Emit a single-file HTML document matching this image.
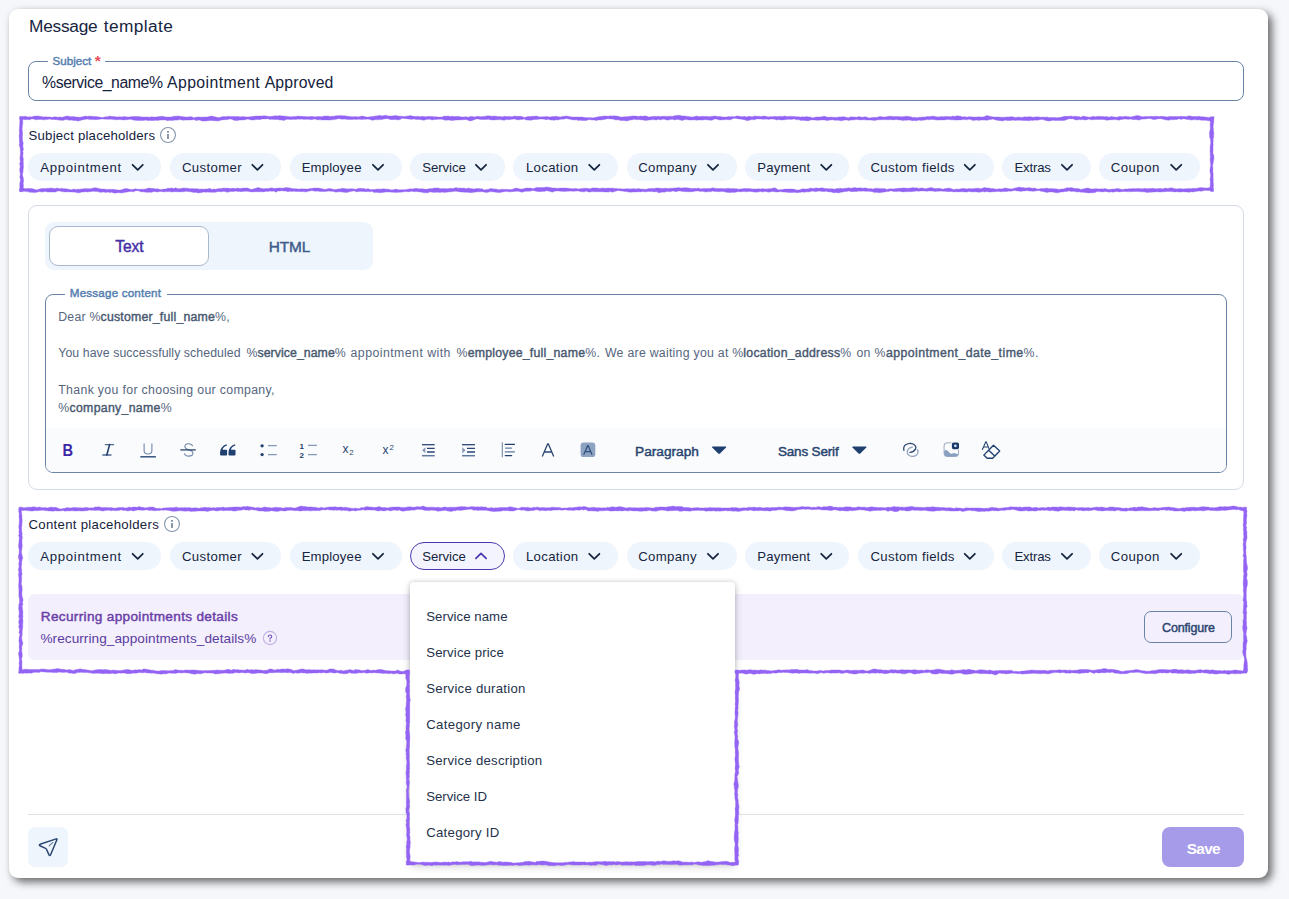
<!DOCTYPE html>
<html><head><meta charset="utf-8"><title>Message template</title>
<style>
*{box-sizing:border-box;margin:0;padding:0}
html,body{width:1289px;height:899px;overflow:hidden}
body{background:#f6f7fb;font-family:"Liberation Sans",sans-serif;color:#16253f;position:relative}
.a{position:absolute}
</style></head><body>
<div class="a" style="left:9px;top:8.5px;width:1259px;height:869.5px;background:#fff;border-radius:9px;box-shadow:4px 4px 9px rgba(0,0,0,.58),0 0 2px rgba(0,0,0,.06)"></div>

<!-- subject field -->
<div class="a" style="left:28px;top:61px;width:1216px;height:40px;border:1px solid #6a84a7;border-radius:8px"></div>
<div class="a" style="left:48px;top:58px;width:57px;height:8px;background:#fff"></div>

<svg style="position:absolute;left:159.0px;top:125.9px" width="18" height="18" viewBox="0 0 18 18"><circle cx="9" cy="9" r="7.45" fill="none" stroke="#8594ab" stroke-width="1.1"/><rect x="8.35" y="7.9" width="1.3" height="5.2" rx=".4" fill="#4a607f"/><circle cx="9" cy="5.8" r=".9" fill="#4a607f"/></svg><div style="position:absolute;left:28.3px;top:153.0px;width:133.0px;height:28px;border-radius:14px;background:#eff5fc;"></div><svg style="position:absolute;left:0;top:0" width="1289" height="899"><path d="M132.6 164.8 L137.7 169.8 L142.8 164.8" fill="none" stroke="#16253f" stroke-width="1.75" stroke-linecap="round" stroke-linejoin="round"/></svg><div style="position:absolute;left:170.3px;top:153.0px;width:111.2px;height:28px;border-radius:14px;background:#eff5fc;"></div><svg style="position:absolute;left:0;top:0" width="1289" height="899"><path d="M252.3 164.8 L257.4 169.8 L262.5 164.8" fill="none" stroke="#16253f" stroke-width="1.75" stroke-linecap="round" stroke-linejoin="round"/></svg><div style="position:absolute;left:290.0px;top:153.0px;width:112.0px;height:28px;border-radius:14px;background:#eff5fc;"></div><svg style="position:absolute;left:0;top:0" width="1289" height="899"><path d="M372.9 164.8 L378.0 169.8 L383.1 164.8" fill="none" stroke="#16253f" stroke-width="1.75" stroke-linecap="round" stroke-linejoin="round"/></svg><div style="position:absolute;left:410.0px;top:153.0px;width:94.5px;height:28px;border-radius:14px;background:#eff5fc;"></div><svg style="position:absolute;left:0;top:0" width="1289" height="899"><path d="M475.9 164.8 L481.0 169.8 L486.1 164.8" fill="none" stroke="#16253f" stroke-width="1.75" stroke-linecap="round" stroke-linejoin="round"/></svg><div style="position:absolute;left:513.4px;top:153.0px;width:104.4px;height:28px;border-radius:14px;background:#eff5fc;"></div><svg style="position:absolute;left:0;top:0" width="1289" height="899"><path d="M589.2 164.8 L594.3 169.8 L599.4 164.8" fill="none" stroke="#16253f" stroke-width="1.75" stroke-linecap="round" stroke-linejoin="round"/></svg><div style="position:absolute;left:626.8px;top:153.0px;width:109.8px;height:28px;border-radius:14px;background:#eff5fc;"></div><svg style="position:absolute;left:0;top:0" width="1289" height="899"><path d="M707.9 164.8 L713.0 169.8 L718.1 164.8" fill="none" stroke="#16253f" stroke-width="1.75" stroke-linecap="round" stroke-linejoin="round"/></svg><div style="position:absolute;left:744.8px;top:153.0px;width:104.6px;height:28px;border-radius:14px;background:#eff5fc;"></div><svg style="position:absolute;left:0;top:0" width="1289" height="899"><path d="M821.2 164.8 L826.3 169.8 L831.4 164.8" fill="none" stroke="#16253f" stroke-width="1.75" stroke-linecap="round" stroke-linejoin="round"/></svg><div style="position:absolute;left:858.0px;top:153.0px;width:136.0px;height:28px;border-radius:14px;background:#eff5fc;"></div><svg style="position:absolute;left:0;top:0" width="1289" height="899"><path d="M964.7 164.8 L969.8 169.8 L974.9 164.8" fill="none" stroke="#16253f" stroke-width="1.75" stroke-linecap="round" stroke-linejoin="round"/></svg><div style="position:absolute;left:1002.0px;top:153.0px;width:88.6px;height:28px;border-radius:14px;background:#eff5fc;"></div><svg style="position:absolute;left:0;top:0" width="1289" height="899"><path d="M1061.9 164.8 L1067.0 169.8 L1072.1 164.8" fill="none" stroke="#16253f" stroke-width="1.75" stroke-linecap="round" stroke-linejoin="round"/></svg><div style="position:absolute;left:1098.8px;top:153.0px;width:101.2px;height:28px;border-radius:14px;background:#eff5fc;"></div><svg style="position:absolute;left:0;top:0" width="1289" height="899"><path d="M1171.1 164.8 L1176.2 169.8 L1181.3 164.8" fill="none" stroke="#16253f" stroke-width="1.75" stroke-linecap="round" stroke-linejoin="round"/></svg>

<!-- editor container -->
<div class="a" style="left:28px;top:205px;width:1216px;height:285px;border:1px solid #d5dbe5;border-radius:9px"></div>
<div class="a" style="left:45px;top:222px;width:328px;height:48px;background:#eff5fc;border-radius:9px"></div>
<div class="a" style="left:49px;top:226px;width:160px;height:40px;background:#fff;border:1px solid #aab8cd;border-radius:9px"></div>

<div class="a" style="left:45px;top:294px;width:1182px;height:178.5px;border:1px solid #6a84a7;border-radius:8px;overflow:hidden"><div class="a" style="left:0;right:0;bottom:0;height:44px;background:#fafbfd"></div></div>
<div class="a" style="left:64.5px;top:290px;width:102px;height:8px;background:#fff"></div>
<svg class="a" style="left:0;top:0" width="1289" height="899" viewBox="0 0 1289 899" font-family="Liberation Sans, sans-serif">
<!-- B -->
<text x="62.6" y="455.6" font-size="15.8" font-weight="bold" fill="#3b28a6" textLength="10.6" lengthAdjust="spacingAndGlyphs">B</text>
<!-- I -->
<g fill="none" stroke-linecap="round"><path d="M105.4 444.6 H113.6 M102.8 455 H111" stroke="#4f6b92" stroke-width="1.4"/><path d="M109.6 444.6 L106.8 455" stroke="#23406c" stroke-width="1.6"/></g>
<!-- U -->
<path d="M144.1 443.4 V450.2 Q144.1 454 148 454 Q151.9 454 151.9 450.2 V443.4" fill="none" stroke="#6f88a8" stroke-width="1.1"/>
<path d="M140.3 456.8 H155.9" stroke="#35557f" stroke-width="1.5"/>
<!-- S strike -->
<path d="M192.6 446.2 Q191.8 443.8 188.6 443.8 Q184.9 443.8 184.9 446.6 Q184.9 448.6 188 449.6 Q192.9 450.6 192.9 453.3 Q192.9 456.1 188.7 456.1 Q185 456.1 184.3 453.4" fill="none" stroke="#6f88a8" stroke-width="1.1"/>
<path d="M180.3 449.9 H195.8" stroke="#2a4671" stroke-width="1.3"/>
<!-- quote -->
<g fill="#1f3f6e"><path d="M226.6 444.2 Q220.2 446.4 220.1 452.6 V454.6 Q220.1 455.5 221 455.5 H226.2 Q227.1 455.5 227.1 454.6 V450.6 Q227.1 449.7 226.2 449.7 H222.6 Q223 446.9 227 445.6 Z"/><path d="M235 444.2 Q228.6 446.4 228.5 452.6 V454.6 Q228.5 455.5 229.4 455.5 H234.6 Q235.5 455.5 235.5 454.6 V450.6 Q235.5 449.7 234.6 449.7 H231 Q231.4 446.9 235.4 445.6 Z"/></g>
<!-- bullets -->
<circle cx="262.1" cy="445.8" r="1.65" fill="#1f3f6e"/><circle cx="262.1" cy="454.6" r="1.65" fill="#1f3f6e"/>
<path d="M268 445.6 H276.8 M268 454.6 H276.8" stroke="#8599b5" stroke-width="1.1"/>
<!-- numbered -->
<text x="299.4" y="448.6" font-size="8" font-weight="bold" fill="#1f3f6e">1</text>
<text x="299.4" y="457.5" font-size="8" font-weight="bold" fill="#1f3f6e">2</text>
<path d="M308 445.4 H316.9 M308 454.6 H316.9" stroke="#8599b5" stroke-width="1.1"/>
<!-- x2 sub -->
<text x="342.4" y="452.5" font-size="12" fill="#2a4671">x</text>
<text x="349.2" y="454.5" font-size="7.8" fill="#2a4671">2</text>
<!-- x2 sup -->
<text x="382.5" y="454" font-size="12" fill="#2a4671">x</text>
<text x="389.4" y="450" font-size="7.8" fill="#2a4671">2</text>
<!-- outdent -->
<path d="M422 444.7 H434.7" stroke="#2a4671" stroke-width="1.3"/><path d="M422 455.7 H434.7" stroke="#5f7a9f" stroke-width="1.5"/>
<path d="M427 448.4 H434.7 M427 452 H434.7" stroke="#2a4671" stroke-width="1.3"/>
<path d="M425.4 447.2 V453.2 L422 450.2 Z" fill="#8599b5"/>
<!-- indent -->
<path d="M462 444.7 H475" stroke="#2a4671" stroke-width="1.3"/><path d="M462 455.7 H475" stroke="#5f7a9f" stroke-width="1.5"/>
<path d="M467 448.4 H475 M467 452 H475" stroke="#2a4671" stroke-width="1.3"/>
<path d="M462.2 447.2 V453.2 L465.6 450.2 Z" fill="#8599b5"/>
<!-- align -->
<path d="M502.3 442.2 V457.3" stroke="#6f88a8" stroke-width="1.1"/>
<path d="M505.3 444.4 H514.4 M505.3 455.6 H511.6" stroke="#23406c" stroke-width="1.3" stroke-linecap="round"/>
<path d="M505.6 448.1 H511.4 M505.3 451.9 H514.4" stroke="#5f7a9f" stroke-width="1.3" stroke-linecap="round"/>
<!-- A -->
<path d="M542.3 456.6 L547.7 443.8 H548.3 L553.7 456.6 M544.3 452 H551.7" fill="none" stroke="#2a4671" stroke-width="1.3" stroke-linejoin="round"/>
<!-- A highlighted -->
<rect x="580.6" y="442.4" width="14.7" height="14.7" rx="3.2" fill="#8ea3c2"/>
<path d="M583.7 454.7 L587.7 445.6 H588.1 L592.1 454.7 M585.2 451.6 H590.6" fill="none" stroke="#2f4d7c" stroke-width="1.2" stroke-linejoin="round"/>
<!-- carets -->
<path d="M712.6 446.4 H725.6 Q726.8 446.6 726 447.6 L720 453.5 Q719.1 454.2 718.2 453.5 L712.2 447.6 Q711.4 446.6 712.6 446.4 Z" fill="#1f3f6e"/>
<path d="M852.9 446.4 H865.9 Q867.1 446.6 866.3 447.6 L860.3 453.5 Q859.4 454.2 858.5 453.5 L852.5 447.6 Q851.7 446.6 852.9 446.4 Z" fill="#1f3f6e"/>
<!-- link -->
<g fill="none" stroke-linecap="round" stroke-width="1.25">
<path d="M903.9 450.3 Q903.1 446.4 905.7 444.7 Q909.5 442.3 913.2 444 Q916.7 446 915.6 448.9 Q914 452 909.9 452.3" stroke="#2a4671"/>
<path d="M912.4 447.2 Q908.4 447.8 907.4 450.6 Q906.6 454 909.6 455.8 Q913.2 457.4 916.4 455.2 Q918.8 453 917.7 449.7" stroke="#93a4bd"/>
</g>
<!-- image -->
<path d="M951.4 442.8 H947.6 Q944.1 442.8 944.1 446.3 V453 Q944.1 456.5 947.6 456.5 H955 Q958.5 456.5 958.5 453 V449.8" fill="none" stroke="#a3b1c8" stroke-width="1.1"/>
<path d="M944.2 451 Q945.6 449.4 947.2 450.4 Q948.8 451.6 949.8 453 Q950.8 454 952.2 453.5 Q954 452.6 955.2 453.2 Q956.8 454 958.4 454.2 Q958 456.5 955 456.5 H947.6 Q944.2 456.5 944.2 453 Z" fill="#8a9fbf"/>
<rect x="951.9" y="442.4" width="7.1" height="6.9" rx="1.7" fill="#1b3a6b"/>
<circle cx="955.4" cy="445.8" r="1.4" fill="#cfe0f5"/>
<!-- clear format -->
<path d="M982.4 449.5 L985.8 441.7 H986.2 L989 448.6 M983.8 446.9 H988.2" fill="none" stroke="#27446f" stroke-width="1.05" stroke-linejoin="round" stroke-linecap="round"/>
<path d="M993.5 445.2 L999.7 451 L992.7 458.2 H987.2 L983.8 455.1 Z M988.7 450.2 L994.7 456" fill="none" stroke="#1f3f6e" stroke-width="1.35" stroke-linejoin="round"/>
</svg>

<svg style="position:absolute;left:163.0px;top:515.0px" width="18" height="18" viewBox="0 0 18 18"><circle cx="9" cy="9" r="7.45" fill="none" stroke="#8594ab" stroke-width="1.1"/><rect x="8.35" y="7.9" width="1.3" height="5.2" rx=".4" fill="#4a607f"/><circle cx="9" cy="5.8" r=".9" fill="#4a607f"/></svg><div style="position:absolute;left:28.3px;top:542.0px;width:133.0px;height:28px;border-radius:14px;background:#eff5fc;"></div><svg style="position:absolute;left:0;top:0" width="1289" height="899"><path d="M132.6 553.8 L137.7 558.8 L142.8 553.8" fill="none" stroke="#16253f" stroke-width="1.75" stroke-linecap="round" stroke-linejoin="round"/></svg><div style="position:absolute;left:170.3px;top:542.0px;width:111.2px;height:28px;border-radius:14px;background:#eff5fc;"></div><svg style="position:absolute;left:0;top:0" width="1289" height="899"><path d="M252.3 553.8 L257.4 558.8 L262.5 553.8" fill="none" stroke="#16253f" stroke-width="1.75" stroke-linecap="round" stroke-linejoin="round"/></svg><div style="position:absolute;left:290.0px;top:542.0px;width:112.0px;height:28px;border-radius:14px;background:#eff5fc;"></div><svg style="position:absolute;left:0;top:0" width="1289" height="899"><path d="M372.9 553.8 L378.0 558.8 L383.1 553.8" fill="none" stroke="#16253f" stroke-width="1.75" stroke-linecap="round" stroke-linejoin="round"/></svg><div style="position:absolute;left:410.0px;top:542.0px;width:94.5px;height:28px;border-radius:14px;background:#f3f4fd;border:1px solid #4a3aae;"></div><svg style="position:absolute;left:0;top:0" width="1289" height="899"><path d="M475.9 558.4 L481.0 553.4 L486.1 558.4" fill="none" stroke="#4a3aae" stroke-width="1.75" stroke-linecap="round" stroke-linejoin="round"/></svg><div style="position:absolute;left:513.4px;top:542.0px;width:104.4px;height:28px;border-radius:14px;background:#eff5fc;"></div><svg style="position:absolute;left:0;top:0" width="1289" height="899"><path d="M589.2 553.8 L594.3 558.8 L599.4 553.8" fill="none" stroke="#16253f" stroke-width="1.75" stroke-linecap="round" stroke-linejoin="round"/></svg><div style="position:absolute;left:626.8px;top:542.0px;width:109.8px;height:28px;border-radius:14px;background:#eff5fc;"></div><svg style="position:absolute;left:0;top:0" width="1289" height="899"><path d="M707.9 553.8 L713.0 558.8 L718.1 553.8" fill="none" stroke="#16253f" stroke-width="1.75" stroke-linecap="round" stroke-linejoin="round"/></svg><div style="position:absolute;left:744.8px;top:542.0px;width:104.6px;height:28px;border-radius:14px;background:#eff5fc;"></div><svg style="position:absolute;left:0;top:0" width="1289" height="899"><path d="M821.2 553.8 L826.3 558.8 L831.4 553.8" fill="none" stroke="#16253f" stroke-width="1.75" stroke-linecap="round" stroke-linejoin="round"/></svg><div style="position:absolute;left:858.0px;top:542.0px;width:136.0px;height:28px;border-radius:14px;background:#eff5fc;"></div><svg style="position:absolute;left:0;top:0" width="1289" height="899"><path d="M964.7 553.8 L969.8 558.8 L974.9 553.8" fill="none" stroke="#16253f" stroke-width="1.75" stroke-linecap="round" stroke-linejoin="round"/></svg><div style="position:absolute;left:1002.0px;top:542.0px;width:88.6px;height:28px;border-radius:14px;background:#eff5fc;"></div><svg style="position:absolute;left:0;top:0" width="1289" height="899"><path d="M1061.9 553.8 L1067.0 558.8 L1072.1 553.8" fill="none" stroke="#16253f" stroke-width="1.75" stroke-linecap="round" stroke-linejoin="round"/></svg><div style="position:absolute;left:1098.8px;top:542.0px;width:101.2px;height:28px;border-radius:14px;background:#eff5fc;"></div><svg style="position:absolute;left:0;top:0" width="1289" height="899"><path d="M1171.1 553.8 L1176.2 558.8 L1181.3 553.8" fill="none" stroke="#16253f" stroke-width="1.75" stroke-linecap="round" stroke-linejoin="round"/></svg>

<!-- recurring -->
<div class="a" style="left:28px;top:594.3px;width:1216px;height:65.8px;background:#f3effd;border-radius:7px"></div>
<svg class="a" style="left:262px;top:629.9px" width="16" height="16" viewBox="0 0 16 16"><circle cx="8" cy="8" r="6.65" fill="none" stroke="#c0b1e6" stroke-width="1.1"/><path d="M6.3 6.6 Q6.3 5 8 5 Q9.7 5 9.7 6.5 Q9.7 7.5 8.6 8 Q8 8.3 8 9.1" fill="none" stroke="#7754c4" stroke-width="1.1" stroke-linecap="round"/><circle cx="8" cy="10.9" r=".75" fill="#7754c4"/></svg>
<div class="a" style="left:1144.3px;top:611px;width:87.7px;height:32px;border:1px solid #6a84a7;border-radius:7px"></div>

<!-- footer -->
<div class="a" style="left:28px;top:814px;width:1216px;height:1px;background:#dee1e6"></div>
<div class="a" style="left:28px;top:827px;width:40px;height:40px;background:#eff5fd;border-radius:7px"></div>
<svg class="a" style="left:28px;top:827px" width="40" height="40" viewBox="0 0 40 40"><path d="M28.2 11.9 L12 17.3 Q10.8 17.9 11.9 18.7 L17.6 21.4 Q18.3 21.8 18.6 22.5 L21 27.9 Q21.9 29.3 22.6 27.8 L28.9 12.8 Q29.2 11.6 28.2 11.9 Z" fill="none" stroke="#2a4671" stroke-width="1.5" stroke-linejoin="round"/><path d="M21.1 18.8 L24.9 15.4" stroke="#5f7898" stroke-width="1.1" stroke-linecap="round"/></svg>
<div class="a" style="left:1162px;top:827px;width:82px;height:40px;background:#a59be8;border-radius:8px"></div>

<!-- dropdown -->
<div class="a" style="left:410px;top:582px;width:325.3px;height:281px;background:#fff;border-radius:4px;box-shadow:0 3px 8px rgba(0,0,0,.2),0 0 4px rgba(0,0,0,.16)"></div>

<span style="position:absolute;white-space:nowrap;line-height:20px;font-size:17.3px;color:#17253f;letter-spacing:-0.231px;left:28.99px;top:16.00px">Message</span>
<span style="position:absolute;white-space:nowrap;line-height:20px;font-size:17.3px;color:#17253f;letter-spacing:0.402px;left:103.69px;top:16.00px">template</span>
<span style="position:absolute;white-space:nowrap;line-height:12px;font-size:11.6px;color:#5680b0;-webkit-text-stroke:0.45px #5680b0;letter-spacing:0.017px;left:52.55px;top:55.00px">Subject</span>
<span style="position:absolute;white-space:nowrap;line-height:17px;font-size:15.5px;color:#e8505a;font-weight:bold;letter-spacing:-0.462px;left:94.86px;top:52.00px">*</span>
<span style="position:absolute;white-space:nowrap;line-height:17px;font-size:15.8px;color:#14223c;letter-spacing:-0.424px;left:42.05px;top:74.00px">%service_name%</span>
<span style="position:absolute;white-space:nowrap;line-height:17px;font-size:15.8px;color:#14223c;letter-spacing:0.400px;left:167.05px;top:74.00px">Appointment</span>
<span style="position:absolute;white-space:nowrap;line-height:17px;font-size:15.8px;color:#14223c;letter-spacing:0.160px;left:264.65px;top:74.00px">Approved</span>
<span style="position:absolute;white-space:nowrap;line-height:15px;font-size:13.2px;color:#14223c;letter-spacing:0.214px;left:28.54px;top:128.00px">Subject placeholders</span>
<span style="position:absolute;white-space:nowrap;line-height:15px;font-size:13.2px;color:#14223c;letter-spacing:0.294px;left:28.54px;top:517.00px">Content placeholders</span>
<span style="position:absolute;white-space:nowrap;line-height:17px;font-size:15.6px;color:#4630a6;-webkit-text-stroke:0.45px #4630a6;letter-spacing:-0.059px;left:115.21px;top:238.00px">Text</span>
<span style="position:absolute;white-space:nowrap;line-height:17px;font-size:15.4px;color:#3d5c8c;-webkit-text-stroke:0.45px #3d5c8c;letter-spacing:-0.137px;left:268.82px;top:238.00px">HTML</span>
<span style="position:absolute;white-space:nowrap;line-height:12px;font-size:11.6px;color:#5680b0;-webkit-text-stroke:0.45px #5680b0;letter-spacing:0.200px;left:69.85px;top:287.00px">Message content</span>
<span style="position:absolute;white-space:nowrap;line-height:14px;font-size:12.3px;color:#56667e;letter-spacing:0.210px;left:58.27px;top:310.00px">Dear %<span style="color:#47586f;-webkit-text-stroke:.4px #47586f">customer_full_name</span>%,</span>
<span style="position:absolute;white-space:nowrap;line-height:14px;font-size:12.3px;color:#56667e;letter-spacing:0.075px;left:58.27px;top:346.00px">You have successfully scheduled</span>
<span style="position:absolute;white-space:nowrap;line-height:14px;font-size:12.3px;color:#56667e;letter-spacing:0.066px;left:246.47px;top:346.00px">%<span style="color:#47586f;-webkit-text-stroke:.4px #47586f">service_name</span>%</span>
<span style="position:absolute;white-space:nowrap;line-height:14px;font-size:12.3px;color:#56667e;letter-spacing:0.456px;left:350.57px;top:346.00px">appointment with</span>
<span style="position:absolute;white-space:nowrap;line-height:14px;font-size:12.3px;color:#56667e;letter-spacing:0.228px;left:456.47px;top:346.00px">%<span style="color:#47586f;-webkit-text-stroke:.4px #47586f">employee_full_name</span>%.</span>
<span style="position:absolute;white-space:nowrap;line-height:14px;font-size:12.3px;color:#56667e;letter-spacing:0.268px;left:604.97px;top:346.00px">We are waiting you at</span>
<span style="position:absolute;white-space:nowrap;line-height:14px;font-size:12.3px;color:#56667e;letter-spacing:0.250px;left:732.17px;top:346.00px">%<span style="color:#47586f;-webkit-text-stroke:.4px #47586f">location_address</span>%</span>
<span style="position:absolute;white-space:nowrap;line-height:14px;font-size:12.3px;color:#56667e;letter-spacing:0.087px;left:856.57px;top:346.00px">on</span>
<span style="position:absolute;white-space:nowrap;line-height:14px;font-size:12.3px;color:#56667e;letter-spacing:0.435px;left:874.57px;top:346.00px">%<span style="color:#47586f;-webkit-text-stroke:.4px #47586f">appointment_date_time</span>%.</span>
<span style="position:absolute;white-space:nowrap;line-height:14px;font-size:12.3px;color:#56667e;letter-spacing:0.335px;left:58.27px;top:383.00px">Thank you for choosing our company,</span>
<span style="position:absolute;white-space:nowrap;line-height:14px;font-size:12.3px;color:#56667e;letter-spacing:0.306px;left:58.27px;top:401.00px">%<span style="color:#47586f;-webkit-text-stroke:.4px #47586f">company_name</span>%</span>
<span style="position:absolute;white-space:nowrap;line-height:15px;font-size:13.7px;color:#27446f;-webkit-text-stroke:0.45px #27446f;letter-spacing:-0.009px;left:635.08px;top:444.00px">Paragraph</span>
<span style="position:absolute;white-space:nowrap;line-height:15px;font-size:13.5px;color:#27446f;-webkit-text-stroke:0.45px #27446f;letter-spacing:-0.166px;left:777.89px;top:444.00px">Sans Serif</span>
<span style="position:absolute;white-space:nowrap;line-height:15px;font-size:13.6px;color:#6a40a8;-webkit-text-stroke:0.45px #6a40a8;letter-spacing:0.331px;left:40.78px;top:609.00px">Recurring appointments details</span>
<span style="position:absolute;white-space:nowrap;line-height:15px;font-size:13.6px;color:#5b3c9e;letter-spacing:0.066px;left:40.42px;top:631.00px">%recurring_appointments_details%</span>
<span style="position:absolute;white-space:nowrap;line-height:14px;font-size:12.5px;color:#2b4570;-webkit-text-stroke:0.45px #2b4570;letter-spacing:-0.183px;left:1162.12px;top:621.00px">Configure</span>
<span style="position:absolute;white-space:nowrap;line-height:17px;font-size:15.4px;color:#ffffff;font-weight:bold;letter-spacing:-0.669px;left:1186.66px;top:840.00px">Save</span>
<span style="position:absolute;white-space:nowrap;line-height:15px;font-size:13.2px;color:#25324b;letter-spacing:0.057px;left:426.24px;top:609.00px">Service name</span>
<span style="position:absolute;white-space:nowrap;line-height:15px;font-size:13.2px;color:#25324b;letter-spacing:0.122px;left:426.24px;top:645.00px">Service price</span>
<span style="position:absolute;white-space:nowrap;line-height:15px;font-size:13.2px;color:#25324b;letter-spacing:0.258px;left:426.24px;top:681.00px">Service duration</span>
<span style="position:absolute;white-space:nowrap;line-height:15px;font-size:13.2px;color:#25324b;letter-spacing:0.327px;left:426.24px;top:717.00px">Category name</span>
<span style="position:absolute;white-space:nowrap;line-height:15px;font-size:13.2px;color:#25324b;letter-spacing:0.253px;left:426.24px;top:753.00px">Service description</span>
<span style="position:absolute;white-space:nowrap;line-height:15px;font-size:13.2px;color:#25324b;letter-spacing:-0.000px;left:426.24px;top:789.00px">Service ID</span>
<span style="position:absolute;white-space:nowrap;line-height:15px;font-size:13.2px;color:#25324b;letter-spacing:0.259px;left:426.24px;top:825.00px">Category ID</span>
<span style="position:absolute;white-space:nowrap;line-height:15px;font-size:13.2px;color:#16253f;letter-spacing:0.689px;left:40.24px;top:160.00px">Appointment</span>
<span style="position:absolute;white-space:nowrap;line-height:15px;font-size:13.2px;color:#16253f;letter-spacing:0.369px;left:181.94px;top:160.00px">Customer</span>
<span style="position:absolute;white-space:nowrap;line-height:15px;font-size:13.2px;color:#16253f;letter-spacing:0.171px;left:301.64px;top:160.00px">Employee</span>
<span style="position:absolute;white-space:nowrap;line-height:15px;font-size:13.2px;color:#16253f;letter-spacing:-0.094px;left:422.34px;top:160.00px">Service</span>
<span style="position:absolute;white-space:nowrap;line-height:15px;font-size:13.2px;color:#16253f;letter-spacing:0.333px;left:525.94px;top:160.00px">Location</span>
<span style="position:absolute;white-space:nowrap;line-height:15px;font-size:13.2px;color:#16253f;letter-spacing:0.339px;left:638.14px;top:160.00px">Company</span>
<span style="position:absolute;white-space:nowrap;line-height:15px;font-size:13.2px;color:#16253f;letter-spacing:0.140px;left:757.24px;top:160.00px">Payment</span>
<span style="position:absolute;white-space:nowrap;line-height:15px;font-size:13.2px;color:#16253f;letter-spacing:0.341px;left:870.44px;top:160.00px">Custom fields</span>
<span style="position:absolute;white-space:nowrap;line-height:15px;font-size:13.2px;color:#16253f;letter-spacing:-0.209px;left:1014.54px;top:160.00px">Extras</span>
<span style="position:absolute;white-space:nowrap;line-height:15px;font-size:13.2px;color:#16253f;letter-spacing:0.470px;left:1110.74px;top:160.00px">Coupon</span>
<span style="position:absolute;white-space:nowrap;line-height:15px;font-size:13.2px;color:#16253f;letter-spacing:0.689px;left:40.24px;top:549.00px">Appointment</span>
<span style="position:absolute;white-space:nowrap;line-height:15px;font-size:13.2px;color:#16253f;letter-spacing:0.369px;left:181.94px;top:549.00px">Customer</span>
<span style="position:absolute;white-space:nowrap;line-height:15px;font-size:13.2px;color:#16253f;letter-spacing:0.171px;left:301.64px;top:549.00px">Employee</span>
<span style="position:absolute;white-space:nowrap;line-height:15px;font-size:13.2px;color:#16253f;letter-spacing:-0.094px;left:422.34px;top:549.00px">Service</span>
<span style="position:absolute;white-space:nowrap;line-height:15px;font-size:13.2px;color:#16253f;letter-spacing:0.333px;left:525.94px;top:549.00px">Location</span>
<span style="position:absolute;white-space:nowrap;line-height:15px;font-size:13.2px;color:#16253f;letter-spacing:0.339px;left:638.14px;top:549.00px">Company</span>
<span style="position:absolute;white-space:nowrap;line-height:15px;font-size:13.2px;color:#16253f;letter-spacing:0.140px;left:757.24px;top:549.00px">Payment</span>
<span style="position:absolute;white-space:nowrap;line-height:15px;font-size:13.2px;color:#16253f;letter-spacing:0.341px;left:870.44px;top:549.00px">Custom fields</span>
<span style="position:absolute;white-space:nowrap;line-height:15px;font-size:13.2px;color:#16253f;letter-spacing:-0.209px;left:1014.54px;top:549.00px">Extras</span>
<span style="position:absolute;white-space:nowrap;line-height:15px;font-size:13.2px;color:#16253f;letter-spacing:0.470px;left:1110.74px;top:549.00px">Coupon</span>
<svg class="a" style="left:0;top:0" width="1289" height="899" viewBox="0 0 1289 899"><path d="M19.6 119.1l2 0l2 0.5l2 0.1l2 -0.2l2 0.2l2 -0.8l2 0.2l2 0.7l2 -0.3l2 0l2 0l2 0.3l2 -0.2l2 -0.2l2 -0.3l2 0.4l2 0l2 0.2l2 0.1l2 0.4l2 0l2 0.1l2 -0.7l2 0.2l2 0.5l2 -0.2l2 0.4l2 0.1l2 0.3l2 -0.1l2 -0.8l2 -0.3l2 -0.4l2 -0.2l2 0.5l2 0l2 -0.2l2.1 0.3l2 -0.1l2 -0.3l2 -0.2l2 0l2 0.1l2 0l2 0l2 0l2 0.4l2 0.1l2 0l2 -0.1l2 0.1l2 0.2l2 -0.2l2 0l2 -0.4l2 0.1l2 0.8l2 0l2 0.4l2 0l2 -0.1l2 -0.1l2 -0.3l2 0.5l2 -0.2l2 0.2l2 -0.2l2 -0.1l2 0.1l2 -0.3l2 0l2 -0.2l2 0.2l2 0.6l2.1 -0.4l2 0.2l2 -0.3l2 -0.1l2 0l2 -0.5l2 0.3l2 0.4l2 -0.4l2 0.2l2 -0.2l2 0l2 -0.3l2 0.8l2 -0.2l2 -0.1l2 0.9l2 0l2 -0.1l2 -0.1l2 -0.3l2 -0.1l2 0.3l2 0.1l2 0.1l2 -0.4l2 -0.6l2 -0.2l2 0l2 -0.3l2 -0.5l2 0.3l2 1l2 0.2l2 0l2 -0.5l2 0.2l2.1 -0.2l2 -0.3l2 -0.7l2 0.8l2 0.2l2 0.2l2 -0.6l2 0l2 0.2l2 -0.8l2 0.1l2 0l2 -0.2l2 0.6l2 -0.1l2 0.3l2 -0.1l2 -0.1l2 0.6l2 0.1l2 0.3l2 -0.8l2 -0.3l2 0.1l2 0l2 -0.1l2 0.2l2 -0.4l2 0.2l2 -0.3l2 0.4l2 -0.1l2 0l2 0.2l2 0.3l2 -0.7l2 0.2l2.1 0.6l2 -0.3l2 0.5l2 -0.2l2 0l2 0l2 0.2l2 -0.3l2 -0.2l2 -0.3l2 -0.6l2 0.1l2 0.5l2 -0.2l2 0.1l2 0.3l2 -0.1l2 0.2l2 -0.4l2 0.2l2 -0.2l2 0.1l2 0.2l2 -0.3l2 0.1l2 -0.2l2 0.3l2 0.8l2 -0.3l2 -0.3l2 0.2l2 -0.2l2 0l2 -0.7l2 -0.1l2 -0.1l2 0.7l2 0.3l2.1 -0.3l2 0.2l2 0.3l2 -0.3l2 -1.4l2 0.3l2 0.2l2 0.2l2 0.3l2 0.1l2 -0.3l2 0.4l2 0l2 0.1l2 0.4l2 0.3l2 -0.8l2 -0.1l2 -0.1l2 0.8l2 -0.6l2 0l2 -0.2l2 0l2 0l2 0.8l2 0.3l2 -0.4l2 0.3l2 0.2l2 -0.1l2 -0.4l2 0l2 0l2 -0.2l2 0l2 -0.2l2.1 0.8l2 0.7l2 -0.6l2 -0.7l2 -0.8l2 0.1l2 0.6l2 0l2 -0.1l2 0l2 -0.3l2 0.5l2 0.2l2 0.1l2 -0.3l2 0.1l2 -0.2l2 0.5l2 0.1l2 -0.6l2 0.1l2 -0.2l2 -0.3l2 -0.3l2 0.7l2 0.3l2 -0.5l2 0l2 -0.5l2 1.1l2 0.1l2 0.1l2 -0.3l2 -0.4l2 0l2 -0.2l2 -0.2l2.1 0l2 0.2l2 0.4l2 -0.5l2 0.7l2 0.2l2 0.1l2 -0.5l2 0.3l2 -0.7l2 -0.1l2 -0.1l2 -0.5l2 0.4l2 0.3l2 0.5l2 0.2l2 -0.2l2 0.6l2 -0.1l2 0.2l2 0l2 0l2 -0.8l2 0l2 0.4l2 -0.1l2 0.6l2 -0.7l2 0.1l2 -0.3l2 -0.3l2 -0.5l2 -0.1l2 0.2l2 0l2 0.6l2 0.4l2.1 -0.2l2 0.8l2 -0.1l2 0l2 0.4l2 -0.4l2 -0.5l2 -0.2l2 -0.6l2 0.6l2 -0.4l2 0.3l2 0.2l2 0.3l2 0.2l2 -0.4l2 0l2 -0.4l2 0.2l2 0.1l2 -0.6l2 0.7l2 -0.7l2 -0.1l2 0.8l2 0.1l2 -0.7l2 -0.2l2 0.7l2 -0.4l2 0l2 0.6l2 0.3l2 -0.7l2 -0.1l2 0.3l2 0.2l2.1 -0.1l2 -0.2l2 0.4l2 -0.3l2 0.1l2 0.1l2 -0.4l2 0l2 0.3l2 0.3l2 -0.2l2 -1l2 0l2 0.6l2 0.2l2 -0.1l2 0l2 -0.3l2 0.2l2 0.1l2 -1l2 -0.5l2 0.2l2 0.4l2 0.2l2 0.3l2 0.4l2 0.6l2 0.1l2 -0.7l2 -0.2l2 0.2l2 -0.9l2 0l2 0.1l2 0.2l2 0l2.1 -0.1l2 0.3l2 -0.3l2 0l2 0.2l2 0.7l2 -0.5l2 0.4l2 0l2 -0.1l2 -0.4l2 -0.1l2 0.1l2 -0.2l2 -0.1l2 0.7l2 -0.2l2 0.8l2 -0.1l2 0.1l2 0.3l2 0l2 -0.7l2 -0.1l2 0l2 0.3l2 0l2 -0.1l2 -0.2l2 0.1l2 0.4l2 -0.1l2 -0.3l2 -0.2l2 0.5l2 -0.1l2 0l2.1 0.5l2 -0.2l2 -0.5l2 -0.1l2 0.5l2 -0.3l2 -0.1l2 -0.2l2 -0.3l2 0.2l2 0.2l2 -0.1l2 0l2 0.3l2 -0.1l2 0.1l2 0.1l2 0.2l2 -0.4l2 -0.2l2 0l2 -0.1l2 -0.1l2 0.1l2 0l2 -0.2l2 0.4l2 -0.2l2 -0.1l2 0.4l2 0l2 0.5l2 -0.3l2 0l2 -0.1l2 0.2l2 0.4l2 -0.2l2.1 0.3l2 -0.8l2 0.4l2 -0.1l2 -0.4l2 -0.3l2 0.2l2 -0.4l2 0l2 0.4l2 0.3l2 0l2 -0.2l2 0l2 0l2 -0.3l2 -0.2l2 0.4l2 0l2 0.3l2 -0.1l2 -0.1l2 0l2 -0.3l2 0l2 0.2l2 -0.5l2 0.3l2 0.9l2 -0.3l2 -0.2l2 0.4l2 -0.4l2 0.1l2 0l2 0.2l2 -0.5l2.1 -0.3l2 -0.4l2 0.6l2 0.6l2 0.2l2 0.2l2 0.3l2 -0.9l2 0.3l2 0l2 0l2 -0.4l2 0.4l2 -0.1l2 -0.1l2 0l2 0.2l2 0.1l2 0l2 0.3l2 -0.6l2 0.2l2 -0.3l2 0.1l2 -0.3l2 -0.3l2 0l2 0.6l2 0.5l2 0.3l2 -0.3l2 -0.5l2 0.2l2 0.2l2 -0.1l2 -0.1l2 0.1l2.1 -0.3l2 -0.6l2 -0.8l2 0.1l2 -0.1l2 0.9l2 0.3l2 -0.4l2 0.1l2 -0.2l2 0.5l2 -0.3l2 -0.6l2 0.6l2 0l2 -0.1l2 -0.1l2 0l2 -0.1l2 0.2l2 0.2l2 0.4l2 -0.3l2 -0.2l2 0.1l2 -0.2l2 0.1l2 0.5l2 -0.6l2 -0.3l2 -0.4l2 0.3l2 0.1l2 -0.2l2 0.7l2 -0.3l2 0.2l2.1 0.4l2 -0.8l2 -0.2l2 -0.1l2 -0.3l2 -0.2l2 0.3l2 0.7l2 -0.1l2 -0.4l2 -0.3l2 0l2 0.5l2 0.6l2 0.3l2 0.1l2 -0.6l2 0.1l2 -0.2l2 -0.1l2 -0.7l2 0.7l2 -0.6l2 0.2l2 0.5l2 0l2 0.6l2 -0.3l2 -0.2l2 0.4l2 -0.2l2 0.4l2 0l2 0.1l2 0.1l2 0.3l2 0.4l2 -0.2l0 -3.4l-2 -0.1l-2 0.1l-2 -0.2l-2 -0.3l-2 -0.2l-2 0l-2 -0.5l-2 0.2l-2 0.1l-2 -0.1l-2 -0.2l-2 -0.5l-2 0.6l-2 0.2l-2 -0.1l-2 -0.2l-2 0.3l-2 -0.1l-2 0l-2 0.1l-2 -0.2l-2 0.1l-2 0.5l-2 -0.5l-2 0l-2 -0.2l-2 0.3l-2 -0.3l-2 -0.1l-2 0.3l-2 -0.2l-2 0.3l-2 -0.1l-2 -0.1l-2 0.4l-2 -0.3l-2 -0.8l-2.1 -0.1l-2 0.4l-2 0.4l-2 0.5l-2 -0.2l-2 -0.2l-2 -0.3l-2 0.6l-2 -0.4l-2 0.1l-2 0.7l-2 -0.1l-2 -0.3l-2 -0.2l-2 0.6l-2 -0.6l-2 0.2l-2 -0.4l-2 0l-2 -0.1l-2 0.1l-2 0.4l-2 -0.6l-2 0.7l-2 0.3l-2 -0.4l-2 -0.4l-2 -0.3l-2 1.1l-2 -0.6l-2 0l-2 -0.3l-2 0.1l-2 -0.4l-2 0.3l-2 0l-2 0l-2.1 0.4l-2 0.6l-2 0.3l-2 0.1l-2 -0.3l-2 0l-2 0.1l-2 -0.1l-2 -0.4l-2 0.3l-2 -0.2l-2 0.2l-2 -0.4l-2 -0.1l-2 0.2l-2 0.3l-2 -0.5l-2 0l-2 0.3l-2 -0.3l-2 0.4l-2 0.2l-2 -0.4l-2 0.3l-2 0.1l-2 -0.7l-2 0.1l-2 0.2l-2 -0.1l-2 0.3l-2 0l-2 0.1l-2 -0.2l-2 -0.1l-2 -0.1l-2 0l-2 -0.4l-2.1 -0.6l-2 -0.3l-2 0.8l-2 0.5l-2 0l-2 -0.1l-2 0.3l-2 0l-2 -0.1l-2 -0.2l-2 -0.1l-2 0.5l-2 -0.6l-2 0.5l-2 -0.8l-2 -0.2l-2 -0.4l-2 0.8l-2 -0.5l-2 0.7l-2 -0.1l-2 -0.1l-2 -0.1l-2 0.3l-2 -0.1l-2 0.4l-2 -0.2l-2 -0.4l-2 -0.3l-2 0.3l-2 0.2l-2 0l-2 0.5l-2 -0.1l-2 0.2l-2 0l-2 0.6l-2.1 -0.5l-2 0.1l-2 -0.6l-2 -0.3l-2 -0.3l-2 0.2l-2 0.3l-2 0l-2 -0.3l-2 0.2l-2 0l-2 -0.2l-2 -0.2l-2 0.1l-2 0.5l-2 0.1l-2 0l-2 -0.4l-2 0.2l-2 0.8l-2 -0.2l-2 0.1l-2 0.3l-2 0.2l-2 -0.8l-2 -0.3l-2 0.4l-2 -0.2l-2 -0.4l-2 0.6l-2 -0.3l-2 0.1l-2 -0.2l-2 0.9l-2 -0.1l-2 -0.8l-2 -0.1l-2 0.3l-2.1 -0.1l-2 0.5l-2 -0.1l-2 -0.1l-2 -0.1l-2 0.1l-2 -0.3l-2 -0.7l-2 0.2l-2 0.5l-2 0l-2 0.1l-2 0.3l-2 0.6l-2 -0.9l-2 0l-2 -0.4l-2 0.3l-2 -0.1l-2 0.3l-2 -0.3l-2 -0.1l-2 -0.3l-2 0.1l-2 -0.3l-2 0.3l-2 0l-2 -0.6l-2 0.7l-2 -0.4l-2 0.3l-2 0.1l-2 -0.3l-2 0.4l-2 -0.3l-2 0.5l-2 -0.4l-2.1 -0.5l-2 0.3l-2 0.1l-2 -0.2l-2 0l-2 -0.2l-2 0.8l-2 -0.3l-2 -0.2l-2 0.7l-2 -0.7l-2 0.4l-2 -0.2l-2 -0.5l-2 0l-2 0.8l-2 -0.4l-2 0.3l-2 -0.2l-2 0.6l-2 -0.2l-2 0.1l-2 -0.5l-2 0.1l-2 -0.4l-2 -0.1l-2 0.1l-2 0.2l-2 0.3l-2 -0.4l-2 0.2l-2 -0.2l-2 0.2l-2 0.1l-2 -0.6l-2 0.6l-2 0.5l-2.1 -0.3l-2 -0.3l-2 -0.3l-2 -0.2l-2 -0.1l-2 -0.3l-2 -0.4l-2 0.4l-2 0.1l-2 0.7l-2 -0.2l-2 0.1l-2 0.1l-2 -0.1l-2 0l-2 0.2l-2 -0.3l-2 0.2l-2 -0.1l-2 0.2l-2 0.2l-2 0.2l-2 -0.9l-2 0l-2 0.3l-2 -0.4l-2 0.6l-2 -0.4l-2 -0.2l-2 0l-2 0.4l-2 0.2l-2 0.2l-2 0.1l-2 0.2l-2 -0.1l-2 -0.6l-2.1 -0.2l-2 -0.3l-2 0.3l-2 -0.3l-2 0.5l-2 -0.2l-2 -0.2l-2 0.4l-2 0.2l-2 0.2l-2 0.6l-2 0.3l-2 0.3l-2 -0.3l-2 0.1l-2 -0.1l-2 -0.1l-2 -0.4l-2 0l-2 -0.1l-2 0l-2 0.1l-2 -0.2l-2 -0.2l-2 -0.5l-2 -0.1l-2 0.1l-2 0.3l-2 0.5l-2 -0.3l-2 -0.5l-2 0.4l-2 -0.1l-2 0.4l-2 -0.1l-2 -0.4l-2 0.3l-2 0.1l-2.1 0.1l-2 -0.3l-2 -0.5l-2 0.2l-2 0l-2 0.3l-2 -0.1l-2 0.4l-2 0.5l-2 -0.8l-2 -0.4l-2 0.1l-2 0l-2 -0.2l-2 0.7l-2 -0.2l-2 -0.1l-2 -0.1l-2 -0.1l-2 0.6l-2 -0.5l-2 0.2l-2 -0.3l-2 -0.2l-2 0.1l-2 -0.1l-2 -0.3l-2 0.3l-2 0.4l-2 0.1l-2 0.2l-2 -0.5l-2 0.2l-2 0.4l-2 -0.5l-2 0.1l-2 0.8l-2.1 -0.6l-2 0.2l-2 0.1l-2 -0.3l-2 -0.4l-2 0.2l-2 0l-2 -0.2l-2 0.2l-2 -0.6l-2 0.4l-2 -0.3l-2 1l-2 0.1l-2 0l-2 -0.4l-2 0l-2 -0.3l-2 0.1l-2 -0.2l-2 0.5l-2 -0.2l-2 -0.3l-2 0.4l-2 -0.4l-2 0.2l-2 -0.2l-2 -0.2l-2 -0.5l-2 0.5l-2 0.1l-2 0.3l-2 -0.2l-2 -0.1l-2 -0.1l-2 -0.6l-2 0.2l-2.1 0.2l-2 0.2l-2 -0.2l-2 -0.7l-2 0.3l-2 0.4l-2 -0.6l-2 0.4l-2 0.2l-2 0.4l-2 0.1l-2 0.4l-2 0.3l-2 -0.1l-2 -0.7l-2 -0.2l-2 0.5l-2 0.3l-2 -0.3l-2 0.1l-2 0l-2 -0.1l-2 -0.4l-2 -0.1l-2 -0.4l-2 0.1l-2 -0.2l-2 0.2l-2 0l-2 0.5l-2 -0.1l-2 0.2l-2 -0.4l-2 0.1l-2 0l-2 0.6l-2 -0.2l-2 0.1l-2.1 0.1l-2 0.1l-2 -0.2l-2 0l-2 0.1l-2 -0.1l-2 -0.2l-2 -0.1l-2 0l-2 -0.2l-2 0.4l-2 0l-2 0.3l-2 0l-2 -0.2l-2 -0.3l-2 -0.3l-2 0l-2 -0.4l-2 0.4l-2 -0.3l-2 0.4l-2 0.2l-2 0.2l-2 -0.2l-2 -0.3l-2 -0.2l-2 0.2l-2 0.1l-2 -0.1l-2 0.1l-2 0.2l-2 0.2l-2 0.3l-2 0.1l-2 0l-2 -0.3l-2.1 0.1l-2 0.1l-2 -0.2l-2 0l-2 -0.2l-2 0l-2 0.1l-2 -0.3l-2 0.5l-2 -0.1l-2 0.2l-2 0.6l-2 0l-2 -0.3l-2 -0.5l-2 -0.5l-2 0.2l-2 0.6l-2 0.1l-2 0l-2 0.3l-2 -0.3l-2 -0.1l-2 0.3l-2 0.5l-2 -1l-2 0l-2 0.3l-2 0.1l-2 -0.3l-2 -0.2l-2 -0.3l-2 -0.3l-2 0.2l-2 0l-2 0.7l-2 0.1l-2.1 0.1l-2 -0.2l-2 -0.5l-2 -0.1l-2 0.2l-2 0.2l-2 0.3l-2 0.1l-2 -0.4l-2 0.5l-2 -0.3l-2 0.1l-2 0l-2 0l-2 -0.4l-2 0l-2 -0.1l-2 0l-2 0.1l-2 0.3l-2 0.1l-2 -0.3l-2 -0.2l-2 0.5l-2 -0.3l-2 0.3l-2 -0.2l-2 -0.2l-2 -0.2l-2 -0.3l-2 0.6l-2 0.1l-2 0.5l-2 0.3l-2 -0.5l-2 -0.3l-2 -0.4l-2.1 0l-2 -0.1l-2 -0.2l-2 0.3l-2 -0.3l-2 0.4l-2 0.4l-2 0.3l-2 -0.1l-2 -0.2l-2 -0.5l-2 0.4l-2 -0.3l-2 -0.5l-2 0.3l-2 0.6l-2 0.3l-2 -0.3l-2 0.4l-2 -0.6l-2 0.4l-2 0.2l-2 -0.4l-2 0.1l-2 -0.2l-2 0.2l-2 -0.6l-2 -0.2l-2 -0.3l-2 0.2l-2 0.2l-2 0.6l-2 -0.2l-2 0.2l-2 -0.6l-2 0.1l-2 0l-2 0.1ZM1210.1 116.8l0.5 2l-0.5 2l0.3 2l-0.3 2l0.2 2.1l0 2l-0.4 2l-0.6 2l0.4 2.1l-0.1 2l0.8 2l0.2 2l0.1 2.1l-0.3 2l-0.3 2l0.1 2l-0.2 2.1l0.3 2l-0.1 2l0.2 2l-0.3 2.1l0.1 2l0.3 2l0.2 2l-0.4 2.1l-0.3 2l0 2l0.3 2l0.4 2.1l-0.3 2l-0.4 2l0.4 2l-0.1 2.1l-0.1 2l-0.2 2l-0.1 2l0.8 2l2.7 0l0.3 -2l-0.7 -2l0.6 -2l-0.3 -2l-0.1 -2.1l0.1 -2l-0.2 -2l0 -2l0.1 -2.1l-0.4 -2l0.2 -2l-0.2 -2l-0.2 -2.1l0.6 -2l0.2 -2l0.4 -2l0.1 -2.1l-0.2 -2l-0.8 -2l0.1 -2l0.1 -2.1l-0.1 -2l0.2 -2l-0.2 -2l0.2 -2.1l-0.1 -2l0.6 -2l-0.1 -2l0.3 -2.1l-0.4 -2l-0.1 -2l-0.3 -2l0.2 -2.1l0.4 -2l0.1 -2l0.1 -2l0.3 -2ZM1213.1 187.2l-2 0.2l-2 0.3l-2 0.3l-2 0.1l-2 -0.3l-2 -0.2l-2 0.2l-2 0.5l-2 0.3l-2 -0.4l-2 0.5l-2 -0.2l-2 0.3l-2 0l-2 0.1l-2 -0.2l-2 -0.1l-2 0.3l-2 -0.1l-2 -0.6l-2 -0.5l-2 0.6l-2 0.2l-2 -0.5l-2 0.9l-2 -0.3l-2 0l-2 0.1l-2 0l-2 -0.4l-2 0.1l-2 0.1l-2 0.3l-2 -0.5l-2 0.4l-2 0.1l-2 -0.2l-2.1 0l-2 0.1l-2 -0.1l-2 0.2l-2 0l-2 0.3l-2 -0.2l-2 0.6l-2 -0.3l-2 -0.5l-2 -0.3l-2 0.6l-2 0.1l-2 0.2l-2 0.2l-2 -0.3l-2 -0.8l-2 0.7l-2 -0.3l-2 0.3l-2 -0.3l-2 -0.1l-2 0.2l-2 0.2l-2 -0.9l-2 -0.1l-2 0.4l-2 0.4l-2 0.5l-2 -0.6l-2 -0.4l-2 0.1l-2 -0.4l-2 -0.5l-2 0.4l-2 -0.3l-2 0.7l-2.1 0.7l-2 -0.1l-2 0.4l-2 -0.5l-2 -0.2l-2 0l-2 -0.2l-2 0.2l-2 -0.6l-2 0.3l-2 0.1l-2 0.1l-2 0.5l-2 -0.2l-2 -0.9l-2 0.2l-2 -0.2l-2 -0.4l-2 0.4l-2 -0.1l-2 -0.3l-2 -0.2l-2 -0.4l-2 0.8l-2 0.2l-2 0.7l-2 0.2l-2 -0.2l-2 -0.5l-2 -0.2l-2 0.7l-2 0.2l-2 -0.1l-2 0.4l-2 -0.3l-2 -0.5l-2 0.1l-2.1 -0.4l-2 -0.1l-2 -0.4l-2 0.5l-2 0.7l-2 -0.5l-2 -0.1l-2 0.2l-2 0.3l-2 0.1l-2 -0.3l-2 0.4l-2 -0.3l-2 -0.1l-2 0.2l-2 0.6l-2 -0.4l-2 0.5l-2 -0.1l-2 -0.9l-2 -0.3l-2 0.3l-2 0.1l-2 0.8l-2 -0.7l-2 -0.3l-2 0.3l-2 -0.1l-2 -0.5l-2 -0.5l-2 0.5l-2 0.4l-2 0.3l-2 -0.7l-2 0.1l-2 0.4l-2 -0.7l-2.1 0.2l-2 -0.5l-2 0.6l-2 0.2l-2 -0.1l-2 -0.2l-2 -0.1l-2 0.3l-2 0.1l-2 0.2l-2 0.2l-2 0.2l-2 -0.1l-2 0.1l-2 0.5l-2 -0.9l-2 0.2l-2 -0.1l-2 -0.1l-2 -0.3l-2 0.2l-2 0.7l-2 -0.5l-2 0.2l-2 -0.7l-2 -0.2l-2 0.3l-2 -0.4l-2 0.1l-2 0.1l-2 -0.5l-2 0.5l-2 0.2l-2 -0.4l-2 0.5l-2 0l-2 0.5l-2 -0.5l-2.1 0.1l-2 0.1l-2 0.7l-2 -0.4l-2 -0.1l-2 0.1l-2 -0.2l-2 -0.1l-2 -0.7l-2 0.2l-2 0.3l-2 -0.4l-2 0.3l-2 0.2l-2 -0.3l-2 0.6l-2 0.3l-2 0l-2 -0.2l-2 0.8l-2 0.4l-2 0.1l-2 -0.8l-2 -0.2l-2 -0.2l-2 0.2l-2 0l-2 0l-2 0.5l-2 -0.1l-2 0.4l-2 -1.2l-2 -0.9l-2 0.4l-2 0.6l-2 -0.1l-2 0.2l-2.1 0l-2 -0.3l-2 0.4l-2 -0.2l-2 0.2l-2 -0.1l-2 0l-2 -0.2l-2 -0.1l-2 0l-2 0l-2 0.1l-2 0.2l-2 0.3l-2 -0.5l-2 0l-2 -0.3l-2 0.3l-2 -0.5l-2 0.2l-2 0.4l-2 -0.4l-2 0l-2 0.2l-2 -0.2l-2 -0.1l-2 -0.5l-2 0.7l-2 -0.1l-2 0.1l-2 -0.1l-2 0.1l-2 0.4l-2 -0.8l-2 0.4l-2 -0.2l-2 0.2l-2.1 -0.3l-2 -0.1l-2 -0.4l-2 0.1l-2 0.1l-2 0l-2 -0.3l-2 0.4l-2 0l-2 0.3l-2 0l-2 0.1l-2 -0.1l-2 0l-2 0.1l-2 -0.1l-2 -0.2l-2 0l-2 0.3l-2 0l-2 0.2l-2 0l-2 0.7l-2 -0.1l-2 -0.1l-2 -0.2l-2 -0.4l-2 0.6l-2 -0.4l-2 0l-2 0.2l-2 -0.1l-2 -0.1l-2 0.2l-2 0.1l-2 -0.3l-2 0l-2.1 -0.3l-2 0l-2 -0.4l-2 0.3l-2 -0.2l-2 0.2l-2 -0.1l-2 -0.2l-2 0.4l-2 -0.2l-2 -0.2l-2 0l-2 -0.1l-2 0.8l-2 -0.3l-2 -0.1l-2 -0.1l-2 0.4l-2 0.2l-2 0.3l-2 -0.5l-2 0l-2 0.1l-2 -0.1l-2 -0.3l-2 -0.2l-2 0l-2 0l-2 0l-2 0.1l-2 0.1l-2 -0.3l-2 0.1l-2 -0.6l-2 -0.2l-2 -0.4l-2 0.5l-2 0l-2.1 0.2l-2 -0.1l-2 -0.1l-2 1l-2 0.1l-2 -0.4l-2 0l-2 -0.1l-2 0.6l-2 0.4l-2 0.1l-2 -0.7l-2 -0.3l-2 0.5l-2 0.8l-2 0.2l-2 0l-2 -0.3l-2 0.1l-2 -0.2l-2 0.4l-2 0.1l-2 -0.8l-2 0.1l-2 -0.3l-2 -0.3l-2 1.1l-2 0l-2 0.6l-2 -1.3l-2 -0.1l-2 -0.1l-2 -0.1l-2 0.6l-2 -0.4l-2 -0.2l-2 -0.5l-2.1 0.8l-2 -0.8l-2 0.3l-2 -0.3l-2 0.2l-2 -0.6l-2 0.6l-2 0.4l-2 -0.3l-2 0.4l-2 0l-2 -0.2l-2 0.2l-2 -0.2l-2 -0.5l-2 0.1l-2 -0.1l-2 0.7l-2 -0.2l-2 0.4l-2 0.4l-2 -0.2l-2 -0.3l-2 0l-2 0l-2 -0.5l-2 0.4l-2 0.2l-2 -0.1l-2 0.5l-2 0.1l-2 0.3l-2 0l-2 0.1l-2 -0.1l-2 -0.6l-2 0.5l-2.1 0.4l-2 -0.3l-2 -0.6l-2 0.1l-2 -0.4l-2 0.2l-2 0.2l-2 -0.2l-2 0.3l-2 0.2l-2 0.1l-2 0l-2 -1l-2 0.6l-2 -0.7l-2 0l-2 -0.3l-2 0.2l-2 0.9l-2 -0.2l-2 -0.4l-2 0.1l-2 0.2l-2 -0.2l-2 -0.3l-2 -0.2l-2 0.6l-2 0.1l-2 0.5l-2 -0.1l-2 -0.4l-2 -0.6l-2 0.3l-2 0.5l-2 0.1l-2 -0.5l-2 -0.5l-2.1 -0.3l-2 0.1l-2 0l-2 0.4l-2 -0.1l-2 0.7l-2 -0.2l-2 0l-2 -0.1l-2 0.3l-2 -0.1l-2 -0.3l-2 0l-2 -0.2l-2 -0.6l-2 -0.2l-2 -0.1l-2 0.4l-2 0.2l-2 -0.3l-2 0.2l-2 0.2l-2 0.1l-2 -0.6l-2 0.5l-2 0.2l-2 -0.1l-2 0.3l-2 -0.1l-2 -0.6l-2 -0.5l-2 0.7l-2 0.6l-2 0.6l-2 -0.4l-2 -0.9l-2 -0.1l-2 0.1l-2.1 0.1l-2 0.4l-2 -0.5l-2 0.3l-2 -0.1l-2 0l-2 0.2l-2 -0.4l-2 0.1l-2 -0.2l-2 0.5l-2 -0.1l-2 0.3l-2 0.6l-2 -0.2l-2 0.3l-2 -1.1l-2 0.6l-2 0l-2 0.3l-2 -0.2l-2 0.3l-2 -0.5l-2 0l-2 0l-2 -0.3l-2 0.3l-2 -0.6l-2 0l-2 -0.2l-2 0.3l-2 0.4l-2 0l-2 -0.9l-2 0.8l-2 -0.6l-2 0.3l-2.1 0l-2 0.8l-2 -0.1l-2 0.6l-2 -0.1l-2 -0.7l-2 0.1l-2 -0.4l-2 0.1l-2 -0.5l-2 0.2l-2 0.7l-2 0.2l-2 0l-2 0l-2 0.1l-2 -0.5l-2 0.4l-2 0.3l-2 -0.2l-2 -0.5l-2 -0.4l-2 0.6l-2 0.8l-2 0.3l-2 -0.2l-2 -0.1l-2 -0.5l-2 0.2l-2 -0.2l-2 0.2l-2 -0.3l-2 -0.1l-2 0l-2 -0.4l-2 -0.5l-2 -0.5l-2.1 0.2l-2 0.5l-2 0.3l-2 0l-2 -0.1l-2 0.2l-2 0.1l-2 0.3l-2 0.1l-2 0.1l-2 -0.4l-2 0.8l-2 -0.4l-2 -0.4l-2 -0.3l-2 0l-2 -0.5l-2 0.6l-2 -0.8l-2 0.5l-2 -0.1l-2 -0.3l-2 0.1l-2 0.1l-2 0.1l-2 0.2l-2 0l-2 0.4l-2 0.7l-2 0l-2 -0.7l-2 -0.5l-2 -0.1l-2 0l-2 0.3l-2 -0.4l-2 0.6l-2.1 0l0 2.5l2.1 0.1l2 -0.4l2 0.5l2 0l2 0.6l2 0.1l2 0.1l2 0.1l2 -0.5l2 -0.4l2 0.5l2 -0.3l2 -0.3l2 0.5l2 0l2 0l2 0l2 0.1l2 -1l2 0l2 0.5l2 0.2l2 0.2l2 -0.2l2 0.1l2 0.1l2 0.1l2 0.1l2 0.5l2 0l2 -0.7l2 0.1l2 -0.4l2 0.3l2 -0.3l2 -0.3l2 -0.2l2.1 0.3l2 0.1l2 0.6l2 0l2 -0.2l2 0.5l2 -0.4l2 0.4l2 -0.3l2 0.8l2 0.1l2 -0.4l2 0.1l2 0.1l2 -0.4l2 -0.3l2 -0.3l2 -0.4l2 0.1l2 0.2l2 -1.1l2 0l2 0.5l2 0.8l2 -0.2l2 0.5l2 -0.1l2 0.1l2 0l2 -0.8l2 0.2l2 0.4l2 -0.6l2 0l2 0.4l2 -0.3l2 0.2l2.1 -0.2l2 0.5l2 -0.4l2 0l2 0l2 0.2l2 -0.2l2 0.1l2 -0.5l2 0.3l2 0.1l2 0.3l2 0.6l2 -0.3l2 0.6l2 -0.1l2 -0.4l2 -0.5l2 0.4l2 -0.2l2 0.1l2 0.1l2 0l2 0l2 -0.9l2 0.3l2 0l2 -0.4l2 0.5l2 0.5l2 -0.7l2 -0.1l2 0l2 -0.4l2 0.4l2 0l2 0.2l2.1 -0.4l2 0l2 0l2 0.4l2 0.2l2 -0.2l2 0.1l2 -0.1l2 0l2 0.1l2 0.1l2 -0.6l2 0.2l2 -0.4l2 0.2l2 -0.2l2 1.1l2 -1.1l2 -0.1l2 -0.3l2 0.4l2 0l2 0.7l2 -0.5l2 0.1l2 -0.2l2 0.3l2 -0.1l2 0l2 0.3l2 -0.1l2 0.5l2 -0.8l2 -0.3l2 -0.4l2 0.5l2 0.1l2 -0.1l2.1 0.5l2 0l2 -0.1l2 0.1l2 -0.6l2 0.2l2 0l2 0.4l2 0.6l2 -0.4l2 0l2 0.2l2 0.2l2 0.2l2 -0.2l2 -0.6l2 -0.3l2 -0.6l2 1.1l2 -0.1l2 -0.4l2 0.3l2 -0.1l2 0.2l2 -0.2l2 0.3l2 -0.5l2 1.2l2 -0.2l2 0.1l2 0.4l2 -0.3l2 -0.2l2 -0.3l2 0.1l2 -0.2l2 0.3l2.1 0l2 0.2l2 -0.1l2 -0.1l2 -0.1l2 -0.3l2 -0.3l2 0.4l2 -0.5l2 -0.2l2 0.5l2 -0.2l2 0.2l2 0.2l2 0.3l2 0.6l2 -0.1l2 0.1l2 -1l2 0.4l2 0.2l2 -0.2l2 0.1l2 0.1l2 -0.3l2 0.3l2 -0.2l2 -0.1l2 -0.4l2 0.1l2 -0.5l2 -0.1l2 0.4l2 0.3l2 0.1l2 0.3l2 -0.1l2.1 0.1l2 0.4l2 -0.1l2 -0.4l2 -0.3l2 -0.1l2 0l2 -0.1l2 0.4l2 0.5l2 -0.4l2 -0.6l2 0.2l2 0.2l2 0.3l2 0.2l2 -0.1l2 -0.4l2 -0.3l2 -0.4l2 0.5l2 0l2 -0.1l2 -0.2l2 -0.3l2 0l2 0.5l2 0.6l2 -0.7l2 -0.4l2 0l2 0l2 -0.7l2 0.2l2 0.6l2 0.2l2 0.2l2.1 -0.5l2 0.2l2 -0.7l2 0.4l2 0.4l2 0.7l2 -0.9l2 -0.3l2 -0.1l2 0.4l2 0l2 0.3l2 -0.4l2 0l2 -0.1l2 0.1l2 0l2 -0.2l2 -0.1l2 0.6l2 0.3l2 0l2 -0.7l2 0.9l2 0l2 -0.4l2 0.2l2 -0.1l2 0.1l2 -0.1l2 0l2 0.2l2 0l2 0.2l2 -0.5l2 0.6l2 -0.7l2 -0.4l2.1 -0.7l2 0.5l2 0.2l2 0.3l2 0.2l2 0.3l2 0.4l2 -0.3l2 0l2 0l2 -0.3l2 0.3l2 -0.6l2 0.4l2 -0.1l2 -0.1l2 -0.2l2 0.2l2 0.3l2 -0.3l2 1.1l2 -0.3l2 -0.3l2 0.1l2 -0.7l2 0.1l2 0.1l2 -0.7l2 0.3l2 0.4l2 -0.8l2 0.1l2 0.4l2 0l2 0.3l2 0.1l2 -0.1l2.1 0l2 -0.5l2 -0.2l2 0.1l2 0.5l2 -0.4l2 0.6l2 0.2l2 -0.4l2 0.2l2 -0.7l2 0.3l2 0l2 0.3l2 -0.1l2 -0.1l2 0.3l2 0.5l2 0.2l2 0l2 -0.3l2 0.2l2 -0.5l2 -0.3l2 0.3l2 -0.4l2 0.1l2 0.2l2 -0.2l2 -0.2l2 0.4l2 0.3l2 0.1l2 -0.4l2 -0.2l2 0.4l2 -0.4l2.1 0.1l2 0.6l2 -0.5l2 -0.3l2 0.3l2 0.2l2 -0.1l2 -0.3l2 0.4l2 0.1l2 0.1l2 0.3l2 0.1l2 -0.2l2 -0.1l2 0.4l2 -0.1l2 -0.3l2 -0.3l2 0.3l2 -0.5l2 0.2l2 -0.6l2 -0.3l2 0.5l2 -0.2l2 -0.4l2 0.2l2 0.2l2 0.1l2 -0.3l2 0.7l2 -0.1l2 0.7l2 0.3l2 -0.3l2 0.4l2.1 -0.6l2 -0.3l2 -0.4l2 -0.1l2 -0.6l2 0.6l2 0.2l2 -0.3l2 0.1l2 -0.4l2 0.2l2 -0.2l2 0.1l2 0.1l2 0l2 0.2l2 0.3l2 0.7l2 -0.3l2 0.5l2 -0.1l2 -0.3l2 -0.4l2 -0.3l2 0l2 -0.8l2 0.5l2 0.3l2 0l2 -0.3l2 0.3l2 0.3l2 -0.2l2 0.1l2 -0.4l2 0.3l2 -0.2l2 -0.2l2.1 -0.2l2 0.1l2 -0.3l2 0l2 0l2 0.4l2 -0.4l2 0.1l2 0.1l2 0.4l2 -0.3l2 0l2 -0.3l2 0.4l2 0l2 0.2l2 0.2l2 -0.3l2 0.3l2 0.2l2 -0.2l2 0.2l2 -0.2l2 0.1l2 0.1l2 0.1l2 -0.5l2 0.2l2 0.3l2 -0.2l2 0.1l2 0.3l2 -0.2l2 -0.4l2 0.4l2 -0.5l2 0.4l2.1 0.1l2 -0.3l2 0l2 -0.3l2 0.1l2 0.3l2 -0.3l2 -0.1l2 0l2 -0.3l2 0.2l2 -0.5l2 -0.4l2 0.5l2 0.1l2 0.4l2 -0.5l2 0l2 -0.3l2 0.4l2 0.1l2 0.2l2 -0.2l2 -0.3l2 -0.4l2 0.9l2 0.1l2 0.5l2 0.6l2 -0.4l2 -0.2l2 0.2l2 0.4l2 0.3l2 -0.2l2 -0.7l2 0.1l2.1 -0.6l2 0.2l2 -0.8l2 0.8l2 -0.3l2 0.3l2 0.5l2 -0.3l2 0.4l2 0l2 0.4l2 0.1l2 0.3l2 -0.3l2 0.1l2 -0.2l2 -1.1l2 0.1l2 0.1l2 0.2l2 -0.4l2 0.2l2 0.5l2 -0.4l2 0.4l2 -0.5l2 -0.1l2 0.3l2 -0.2l2 -0.3l2 0l2 0.3l2 -0.1l2 0.2l2 -0.4l2 0.1l2 -0.1l2.1 0.2l2 0.2l2 0l2 0.2l2 0.5l2 -0.2l2 -0.1l2 -0.2l2 -0.1l2 -0.1l2 0.1l2 0.1l2 -0.3l2 0l2 -0.3l2 0.1l2 0l2 0.2l2 0.2l2 -0.2l2 0.3l2 0.1l2 -0.4l2 0.2l2 0l2 0.4l2 -0.6l2 0.3l2 -0.4l2 -0.3l2 -0.4l2 0.3l2 -0.4l2 -0.6l2 0.4l2 -0.1l2 0.2l2 0.4ZM23.2 191.7l0.3 -2l-0.3 -2l0.3 -2l-0.3 -2l0.3 -2.1l0 -2l-0.3 -2l-0.6 -2l0 -2.1l0.5 -2l0 -2l0.4 -2l-0.2 -2.1l0.1 -2l-0.2 -2l0.2 -2l-0.4 -2.1l-0.2 -2l0.4 -2l-0.4 -2l0.7 -2.1l-0.5 -2l-0.1 -2l0.4 -2l-0.7 -2.1l-0.1 -2l-0.2 -2l0.2 -2l0.1 -2.1l-0.3 -2l-0.2 -2l0.1 -2l0.3 -2.1l0.3 -2l-0.1 -2l0 -2l0 -2l-2.7 0l-0.2 2l0.1 2l-0.2 2l0 2l-0.2 2.1l-0.1 2l-0.1 2l0.2 2l-0.3 2.1l0 2l0.3 2l-0.2 2l0.3 2.1l-0.5 2l0.9 2l0.2 2l0.2 2.1l0 2l-0.1 2l-0.3 2l0 2.1l0.4 2l-0.8 2l0.5 2l0 2.1l-0.5 2l0.2 2l0.5 2l-0.2 2.1l-0.3 2l0.7 2l-0.3 2l-0.5 2.1l0.1 2l0 2l-0.4 2l0.3 2ZM19.1 510.2l2 0l2 0.3l2 -0.3l2 0.4l2 0.2l2 0.2l2 -0.1l2 -0.3l2 0.1l2 -0.3l2 -0.1l2 -0.1l2 0.3l2 0.2l2 0.3l2 0l2 0.2l2 -0.4l2 0.1l2 0.1l2 -0.2l2 -0.2l2 0.6l2 -0.4l2 0.2l2 -0.2l2 0l2 0.2l2 -0.1l2 -0.2l2 0.4l2 -0.2l2 -0.1l2 -0.1l2 -0.6l2 0.2l2 -0.1l2 0.2l2 -0.1l2 0l2 0.5l2 0.2l2 -0.4l2.1 -0.3l2 0l2 0.5l2 -0.5l2 0.4l2 -0.1l2 -0.2l2 -0.7l2 0.7l2 -0.1l2 0.6l2 -0.2l2 -0.4l2 0.7l2 -0.5l2 -0.4l2 0l2 0.1l2 0.1l2 -0.3l2 -0.2l2 0.7l2 -0.2l2 0.3l2 0.1l2 -0.2l2 0.1l2 -0.5l2 0.2l2 -0.4l2 0.3l2 0.3l2 0.6l2 0.2l2 -0.1l2 -0.1l2 -0.3l2 0l2 0.3l2 0.1l2 -0.2l2 0.1l2 0.4l2 -0.3l2.1 0.1l2 -0.2l2 -0.2l2 0l2 0.1l2 0.1l2 0.3l2 -0.5l2 -0.4l2 -0.2l2 0.4l2 0.3l2 -0.4l2 -0.3l2 0.4l2 -0.2l2 0l2 0.1l2 0l2 0.4l2 0.1l2 -0.5l2 -0.4l2 0l2 -0.7l2 0.5l2 0l2 0.2l2 -0.6l2 0.4l2 0.1l2 0.5l2 0.4l2 -0.1l2 0.2l2 0.4l2 -0.2l2 0l2 -0.6l2 0.3l2 0.3l2 0.1l2 -0.4l2 -0.4l2.1 0.3l2 0l2 -0.5l2 -0.1l2 -0.1l2 0.3l2 0.2l2 -0.2l2 0.5l2 -0.1l2 -0.3l2 0.1l2 -0.1l2 0.2l2 0l2 -0.2l2 0.1l2 -0.2l2 0.2l2 -0.6l2 -0.4l2 0.4l2 -0.6l2 0.5l2 0.1l2 0.2l2 -0.2l2 0.1l2 -0.3l2 0.7l2 -0.3l2 0.3l2 0l2 0.6l2 -0.5l2 -0.3l2 0.5l2 -0.5l2 -0.1l2 -0.2l2 -0.4l2 0.6l2 -0.4l2 0.2l2.1 0l2 0l2 0.1l2 0.8l2 -0.2l2 -0.2l2 0.3l2 -0.2l2 -0.6l2 0.6l2 0.1l2 -0.8l2 0.2l2 0.3l2 -0.4l2 0.8l2 0.3l2 -0.5l2 -0.3l2 0.1l2 -0.6l2 0.3l2 -0.4l2 -0.5l2 0.1l2 0.1l2 0.5l2 0.4l2 0l2 0.1l2 -0.4l2 0.2l2 0.1l2 0.9l2 -0.2l2 -0.3l2 -0.3l2 -0.2l2 0.6l2 0.3l2 0.3l2 -0.8l2 0.1l2.1 -0.7l2 0.3l2 -0.2l2 -0.2l2 -0.3l2 -0.3l2 -0.1l2 -0.1l2 1.1l2 -0.2l2 0.3l2 -0.2l2 0.1l2 -0.1l2 0l2 0.2l2 0.5l2 0.4l2 0.2l2 0.1l2 -0.4l2 0l2 -0.2l2 -0.4l2 0.1l2 -0.1l2 0.4l2 -0.1l2 0.1l2 -0.7l2 -0.6l2 0l2 0.6l2 -0.3l2 0.5l2 0.5l2 -0.3l2 -0.1l2 -0.2l2 -0.6l2 0l2 1l2 -0.5l2 0.1l2.1 0.3l2 -0.4l2 0.2l2 -0.1l2 -0.4l2 0.1l2 0l2 -0.3l2 0.5l2 -0.2l2 -0.4l2 0.5l2 0l2 0.1l2 0.2l2 -0.6l2 0.2l2 0.1l2 -0.6l2 0.5l2 -0.7l2 1.4l2 0.2l2 -0.2l2 0.3l2 -0.1l2 0.4l2 -0.6l2 0l2 0l2 -0.3l2 -0.1l2 0.5l2 0.2l2 -0.2l2 -0.2l2 0.2l2 -0.2l2 0.3l2 -0.3l2 -0.1l2 0.5l2 -0.5l2 0.1l2.1 0.2l2 0l2 0l2 0.3l2 0.1l2 -0.4l2 0.1l2 -0.3l2 -0.4l2 0.7l2 0.1l2 0.2l2 -0.6l2 -0.5l2 -0.1l2 0.2l2 0.3l2 0.5l2 -0.4l2 0l2 -0.2l2 -0.1l2 0.2l2 0.6l2 0l2 -0.5l2 0.2l2 0l2 0.3l2 -0.5l2 -0.1l2 -0.1l2 -0.2l2 0.1l2 0.2l2 -0.2l2 0.8l2 -0.1l2 -0.2l2 0.1l2 -0.2l2 0.4l2 -0.3l2 0.3l2.1 -0.3l2 -0.1l2 -0.2l2 0.4l2 -0.2l2 0.3l2 0.1l2 -0.1l2 0.4l2 -0.3l2 -0.4l2 -0.2l2 -0.4l2 0.5l2 -0.6l2 0.2l2 0.6l2 -0.3l2 0.1l2 -0.1l2 -0.1l2 0.3l2 -0.1l2 0l2 0.5l2 -0.8l2 -0.1l2 0.1l2 -0.7l2 0.1l2 0l2 0.3l2 0.4l2 0.2l2 0l2 0.2l2 -0.1l2 -0.6l2 -0.6l2 -0.2l2 -0.2l2 -0.2l2 0.4l2 -0.3l2.1 0.2l2 0.5l2 -0.3l2 0l2 -0.2l2 0.1l2 0.6l2 -0.1l2 0.2l2 0l2 0.3l2 0l2 -0.7l2 0.3l2 0.3l2 0.6l2 -0.5l2 0.4l2 0.2l2 0.1l2 -0.5l2 0.2l2 -0.3l2 -0.2l2 -0.2l2 -0.3l2 0.3l2 -0.2l2 0.7l2 0.1l2 0.6l2 -0.5l2 -0.2l2 -0.1l2 -0.2l2 0.2l2 -0.3l2 -0.1l2 0.2l2 1.1l2 -0.9l2 0.3l2 0.7l2.1 0.2l2 -0.5l2 -1.2l2 0.4l2 -0.1l2 0.7l2 -0.1l2 -0.1l2 -0.8l2 0.3l2 0l2 0l2 0.3l2 0l2 -0.4l2 0.2l2 0.5l2 0.2l2 0.1l2 0l2 -0.4l2 -0.1l2 0l2 -0.5l2 0.2l2 0.4l2 -0.1l2 0.2l2 0.1l2 0.1l2 -0.2l2 0l2 -0.3l2 0.8l2 -0.2l2 -0.4l2 -0.4l2 -0.2l2 0.5l2 0.1l2 0.3l2 0.4l2 -0.1l2 -0.2l2.1 0.2l2 -0.3l2 0.2l2 -0.4l2 -0.3l2 0.1l2 0l2 0.2l2 -0.5l2 -0.2l2 0.2l2 -0.4l2 -0.2l2 0.3l2 -0.9l2 0.5l2 0.4l2 0.6l2 0.3l2 0l2 -0.2l2 -0.2l2 0.4l2 -0.1l2 -0.2l2 0.3l2 0l2 -0.7l2 0.2l2 -0.4l2 0.3l2 -0.3l2 0.3l2 0.4l2 -0.6l2 0.6l2 0.3l2 0.1l2 -0.5l2 -0.5l2 0.1l2 0.3l2 0l2 0.1l2.1 -0.3l2 0.5l2 -1.2l2 0.7l2 -0.2l2 0.5l2 0.1l2 -0.4l2 0.3l2 -0.3l2 -0.2l2 -0.4l2 0.5l2 0.4l2 0.1l2 0.2l2 -0.3l2 -0.1l2 -0.1l2 0.3l2 -0.2l2 0.3l2 -0.3l2 -0.6l2 0.8l2 0.3l2 0l2 0.1l2 -0.7l2 0.2l2 -0.2l2 0.5l2 -0.1l2 -0.2l2 0.1l2 -0.2l2 0.2l2 -0.1l2 0.1l2 -0.1l2 -0.2l2 0.1l2 -0.1l2 0.2l2.1 -0.7l2 0.1l2 -0.4l2 0.7l2 -0.4l2 0.5l2 0.1l2 0.5l2 -0.1l2 -0.1l2 -0.1l2 0.3l2 0.4l2 -0.7l2 0.1l2 0.1l2 -0.6l2 0.4l2 0l2 -0.3l2 0.1l2 0.2l2 -0.1l2 -0.4l2 -0.3l2 0.4l2 0.1l2 0.1l2 0.1l2 0l2 -0.1l2 -0.4l2 0.2l2 -0.1l2 -0.4l2 -0.2l2 -0.3l2 0.2l2 0.1l2 -0.1l2 0.6l2 0.6l2 0.1l2.1 0.1l0 -3.7l-2.1 -0.1l-2 0.2l-2 -0.3l-2 0.1l-2 -0.6l-2 -0.5l-2 0l-2 0.4l-2 0.3l-2 -0.1l-2 -0.1l-2 0.3l-2 -0.3l-2 0.4l-2 0.5l-2 0.2l-2 -0.2l-2 0.2l-2 -0.6l-2 0l-2 -0.3l-2 0l-2 0.2l-2 0.5l-2 0.1l-2 -0.4l-2 0l-2 0.1l-2 0.2l-2 0l-2 0.6l-2 -0.3l-2 0.6l-2 0l-2 -0.2l-2 -0.4l-2 -0.2l-2 -0.3l-2 -0.3l-2 0.3l-2 0l-2 0.3l-2 0.3l-2.1 0l-2 0l-2 -0.3l-2 0.5l-2 0.2l-2 -0.4l-2 -0.4l-2 -0.2l-2 -0.6l-2 0.2l-2 0l-2 0.8l-2 -0.6l-2 0.6l-2 0.1l-2 0.7l-2 -0.6l-2 0.4l-2 0l-2 -0.6l-2 -0.1l-2 -0.1l-2 -0.2l-2 -0.4l-2 0.1l-2 0.4l-2 0.5l-2 -0.3l-2 -0.5l-2 0.1l-2 0l-2 -0.2l-2 0.5l-2 0.2l-2 0.3l-2 -0.4l-2 0.1l-2 0.1l-2 -0.3l-2 0.1l-2 0.1l-2 0.1l-2 -0.5l-2 -0.1l-2.1 -0.1l-2 -0.1l-2 0.2l-2 0l-2 -0.3l-2 -0.1l-2 0.4l-2 -0.1l-2 0l-2 -0.1l-2 0.5l-2 -0.4l-2 0.7l-2 -0.1l-2 -0.3l-2 0.4l-2 0.2l-2 -0.7l-2 0.1l-2 0.5l-2 -1l-2 0l-2 0.2l-2 -0.1l-2 0.6l-2 -0.7l-2 0.3l-2 -0.2l-2 0.1l-2 -0.2l-2 -0.2l-2 0.8l-2 0l-2 0.2l-2 0.3l-2 0.2l-2 0l-2 -0.4l-2 -0.1l-2 -0.4l-2 0.4l-2 0.5l-2 0.1l-2 0l-2.1 0l-2 -0.2l-2 -0.2l-2 0.1l-2 0.1l-2 -0.2l-2 0.2l-2 -0.2l-2 -0.1l-2 0.6l-2 0.1l-2 -0.4l-2 0l-2 -0.4l-2 0.9l-2 -0.6l-2 -0.3l-2 0.1l-2 0.2l-2 -0.4l-2 -0.1l-2 -0.1l-2 -0.2l-2 0.1l-2 -0.4l-2 -0.2l-2 0.6l-2 -0.3l-2 0.3l-2 0.2l-2 -0.1l-2 -0.1l-2 -0.1l-2 0l-2 -0.1l-2 -0.6l-2 0.1l-2 0.4l-2 0l-2 0.4l-2 -0.3l-2 0.2l-2 -0.5l-2 0.1l-2.1 -0.5l-2 0.7l-2 0.4l-2 -0.4l-2 0.7l-2 -0.1l-2 -0.1l-2 0l-2 0l-2 -0.3l-2 0l-2 -0.5l-2 0.3l-2 0.3l-2 0l-2 -0.3l-2 0.2l-2 -0.3l-2 -0.2l-2 0.8l-2 -0.1l-2 0.1l-2 -0.8l-2 0.3l-2 -0.4l-2 0.6l-2 0.1l-2 -0.2l-2 0.2l-2 -0.3l-2 0.2l-2 -0.8l-2 -0.4l-2 0.4l-2 0.4l-2 -0.4l-2 0.8l-2 -0.3l-2 -0.4l-2 0.9l-2 -0.4l-2 0.5l-2 -0.6l-2.1 -0.3l-2 0.2l-2 -0.1l-2 -0.2l-2 0.5l-2 0.1l-2 0.1l-2 0.3l-2 -0.3l-2 -0.3l-2 0l-2 -0.2l-2 0.2l-2 0.4l-2 -0.3l-2 0.1l-2 0.4l-2 -0.1l-2 0.1l-2 0.2l-2 -0.2l-2 0l-2 0.3l-2 -0.2l-2 -0.5l-2 0.3l-2 0.1l-2 -0.5l-2 0.3l-2 -0.2l-2 0.3l-2 0.4l-2 -0.2l-2 0.2l-2 0.3l-2 -0.2l-2 -0.5l-2 0.2l-2 -0.3l-2 0.6l-2 0l-2 -0.1l-2 0.1l-2 0l-2.1 -0.2l-2 0l-2 0l-2 -0.1l-2 0.1l-2 -0.4l-2 0.5l-2 -0.1l-2 0.3l-2 -0.2l-2 0.1l-2 -0.6l-2 0.4l-2 0l-2 0.5l-2 -0.5l-2 -0.4l-2 0l-2 0.1l-2 -0.9l-2 -0.1l-2 0l-2 0.3l-2 -0.7l-2 0.2l-2 0.3l-2 0.2l-2 0.5l-2 -0.2l-2 -0.1l-2 -0.1l-2 0.4l-2 -0.1l-2 0.7l-2 0.1l-2 -0.2l-2 -0.2l-2 -0.2l-2 0.4l-2 -0.1l-2 0l-2 0.2l-2 -0.2l-2 0.1l-2.1 0l-2 -0.3l-2 0.3l-2 0.2l-2 -0.7l-2 -0.3l-2 -0.5l-2 0.4l-2 0.3l-2 -0.3l-2 -0.1l-2 0.6l-2 -0.1l-2 0.6l-2 -0.1l-2 0.2l-2 -0.3l-2 0l-2 0l-2 -0.4l-2 0.3l-2 0.1l-2 -0.1l-2 -0.8l-2 -0.3l-2 0.5l-2 -0.3l-2 0.4l-2 0.2l-2 0.2l-2 0.3l-2 -0.4l-2 0.5l-2 0.1l-2 0.1l-2 0.1l-2 -0.7l-2 -0.1l-2 0l-2 -0.2l-2 0l-2 0.5l-2 0.1l-2 -0.1l-2.1 -0.1l-2 -0.2l-2 0.4l-2 -0.9l-2 0.5l-2 -0.2l-2 0.8l-2 -0.2l-2 -0.6l-2 0.2l-2 -0.1l-2 0l-2 0.8l-2 0.3l-2 -0.6l-2 -0.3l-2 -0.5l-2 -0.3l-2 0.7l-2 0.1l-2 0l-2 0l-2 0l-2 0.4l-2 -0.1l-2 0.4l-2 -0.7l-2 0.4l-2 0.1l-2 -1.1l-2 0.2l-2 -0.3l-2 0.1l-2 -0.1l-2 0.2l-2 -0.3l-2 -0.2l-2 0.4l-2 0.3l-2 -0.4l-2 -0.1l-2 -0.1l-2 0.2l-2 0.2l-2.1 0.2l-2 0.1l-2 -0.1l-2 0.1l-2 0.1l-2 -0.3l-2 0l-2 0.7l-2 -0.3l-2 -0.2l-2 0.2l-2 -0.3l-2 0l-2 0.1l-2 0l-2 -0.4l-2 -0.9l-2 0.4l-2 0.6l-2 -0.4l-2 0.4l-2 0.3l-2 -0.3l-2 -0.3l-2 0.2l-2 0.6l-2 -0.1l-2 0.1l-2 -0.5l-2 -0.1l-2 0.1l-2 0.1l-2 0.1l-2 0.3l-2 0.5l-2 -0.4l-2 -0.1l-2 0.1l-2 -1.2l-2 0.7l-2 0.2l-2 0.1l-2 -0.4l-2.1 0.1l-2 -0.5l-2 0.3l-2 0.8l-2 -0.2l-2 1l-2 -0.1l-2 -0.3l-2 0.3l-2 -0.2l-2 -0.2l-2 -0.6l-2 -0.2l-2 0.2l-2 -0.3l-2 0l-2 0.2l-2 -0.6l-2 0.2l-2 0l-2 0.1l-2 0.3l-2 0.4l-2 0.2l-2 -0.6l-2 0.7l-2 -0.2l-2 -0.6l-2 0.1l-2 -0.4l-2 0l-2 0.2l-2 -0.6l-2 0.1l-2 -0.7l-2 0.6l-2 0.8l-2 0.7l-2 -0.1l-2 -0.4l-2 0.1l-2 0l-2 -0.1l-2 0.7l-2.1 -0.4l-2 -0.2l-2 -0.2l-2 -0.1l-2 0.5l-2 0.1l-2 -0.5l-2 0.2l-2 -0.7l-2 0.4l-2 0.7l-2 -0.2l-2 -0.3l-2 0.5l-2 -0.8l-2 -0.1l-2 -0.4l-2 -0.4l-2 0.5l-2 -0.2l-2 0.6l-2 -0.1l-2 -0.1l-2 -0.1l-2 0.2l-2 0.2l-2 0l-2 0.2l-2 0.2l-2 -0.6l-2 0.3l-2 0.2l-2 -0.2l-2 0.6l-2 -0.4l-2 0.5l-2 -0.7l-2 0.3l-2 -0.4l-2 0.2l-2 0.3l-2 0.4l-2 -0.1l-2 -0.3l-2.1 0.1l-2 0.2l-2 -0.6l-2 0.3l-2 -0.2l-2 0.2l-2 -0.2l-2 0.4l-2 -0.8l-2 0l-2 0.5l-2 -0.2l-2 0.3l-2 -0.1l-2 0.3l-2 0.1l-2 0.6l-2 -0.5l-2 0.3l-2 -0.6l-2 -0.8l-2 0l-2 0.1l-2 0.3l-2 0.4l-2 -0.7l-2 0.1l-2 -0.7l-2 0.7l-2 -0.2l-2 -0.1l-2 0.6l-2 -0.6l-2 0.8l-2 0.2l-2 -0.6l-2 0.1l-2 0l-2 0.2l-2 0.5l-2 -0.2l-2 -0.4l-2 0.1l-2 -0.2l-2.1 -0.1l-2 0.1l-2 -0.1l-2 -0.7l-2 0.3l-2 0l-2 1l-2 -0.2l-2 0.2l-2 -0.6l-2 0.1l-2 0.5l-2 -0.2l-2 0l-2 -0.1l-2 -0.3l-2 0l-2 0.5l-2 0l-2 -0.5l-2 0.9l-2 0.2l-2 0.5l-2 -0.3l-2 -0.9l-2 -0.5l-2 0.1l-2 -0.3l-2 0.4l-2 0.5l-2 -0.6l-2 0.4l-2 -0.4l-2 -0.5l-2 0.5l-2 -0.4l-2 -0.2l-2 0.4l-2 0l-2 0.1l-2 0.4l-2 0l-2 -0.5l-2 0.4ZM1244.1 507.3l-0.2 2l-0.2 2l0.1 2l-0.2 2l0 2.1l-0.2 2l0.1 2l-0.2 2l-0.1 2l0.3 2.1l-0.2 2l0.4 2l-0.2 2l0.2 2.1l0.1 2l-0.7 2l0.5 2l-0.4 2l0 2.1l0.2 2l-0.1 2l0.4 2l-0.1 2.1l-0.6 2l0.9 2l-0.3 2l-0.1 2l0 2.1l0 2l-0.1 2l0 2l0.1 2.1l0.6 2l-0.7 2l0.2 2l-0.2 2l-0.2 2.1l0 2l0.2 2l0.2 2l-0.4 2l0.4 2.1l0.2 2l-0.2 2l-0.2 2l-0.3 2.1l0.7 2l-0.2 2l-0.1 2l-0.1 2l0 2.1l-0.4 2l0.7 2l0 2l0 2.1l-0.7 2l0.1 2l0 2l-0.4 2l0 2.1l0.4 2l0.5 2l0 2l-0.1 2.1l0 2l0.1 2l-0.5 2l0 2l-0.1 2.1l0.2 2l-0.4 2l0 2l0.5 2.1l0.8 2l0.3 2l0 2l-0.3 2l-0.3 2.1l0 2l-0.2 2l-0.4 2l-0.1 2.1l3.6 0l1 -2.1l-0.1 -2l-0.1 -2l-0.1 -2l-0.1 -2.1l-0.3 -2l-0.5 -2l-0.5 -2l-0.1 -2l0 -2.1l0 -2l0.5 -2l-0.3 -2l0.3 -2.1l0.5 -2l0.4 -2l-0.5 -2l-0.1 -2l-0.8 -2.1l0.4 -2l0.2 -2l0.6 -2l-0.3 -2.1l-0.3 -2l0.1 -2l-0.3 -2l0.2 -2l-0.1 -2.1l0 -2l0.4 -2l-0.5 -2l0.1 -2.1l0.8 -2l-0.4 -2l0 -2l-0.3 -2l-0.3 -2.1l0.2 -2l-0.1 -2l0 -2l0.1 -2.1l0.2 -2l0.5 -2l0.3 -2l0 -2l-0.2 -2.1l-0.7 -2l0.5 -2l0.2 -2l-0.5 -2l0.5 -2.1l0.4 -2l-0.3 -2l-0.5 -2l-0.3 -2.1l-0.1 -2l0 -2l-0.2 -2l-0.3 -2l0 -2.1l-0.1 -2l0.4 -2l-0.3 -2l-0.1 -2.1l0.3 -2l0.5 -2l0.5 -2l-0.2 -2l0 -2.1l0 -2l-0.6 -2l0.4 -2l-0.8 -2.1l0.7 -2l-0.1 -2l-0.1 -2l0.3 -2l0.3 -2.1l-0.4 -2l0.5 -2l-0.9 -2l0.1 -2ZM1246.5 670.5l-2.1 -0.1l-2 0.5l-2 -0.5l-2 0.2l-2 -0.5l-2 0l-2 0.3l-2 0.3l-2 -0.1l-2 0.2l-2 -0.5l-2 0.6l-2 -0.3l-2 0l-2 -0.1l-2 -0.2l-2.1 -0.6l-2 0.6l-2 -0.3l-2 -0.2l-2 0.3l-2 0.1l-2 -0.8l-2 0.6l-2 0.2l-2 0.3l-2 -0.1l-2 -0.1l-2 -0.5l-2 0.2l-2 0.2l-2 -0.5l-2 0.1l-2 0.1l-2.1 -0.6l-2 0l-2 0.3l-2 0.3l-2 -0.1l-2 -0.1l-2 -0.1l-2 -0.1l-2 0l-2 0.2l-2 0.6l-2 0.1l-2 0.2l-2 0.5l-2 0.1l-2 0.1l-2.1 -0.6l-2 0.1l-2 -0.5l-2 -0.6l-2 -0.2l-2 0.5l-2 0.3l-2 0.2l-2 0.2l-2 0.1l-2 0.4l-2 0.2l-2 -0.4l-2 -0.7l-2 -0.3l-2 -0.4l-2 -0.1l-2.1 -0.3l-2 0.2l-2 -0.7l-2 -0.2l-2 0.6l-2 0.3l-2 0.2l-2 0.3l-2 0.3l-2 0l-2 -0.3l-2 -0.4l-2 0.1l-2 0l-2 -0.2l-2 0l-2 0.5l-2.1 0.3l-2 0.1l-2 0.1l-2 -0.5l-2 0.5l-2 -0.3l-2 -0.1l-2 0.2l-2 -0.5l-2 0.3l-2 0.2l-2 0l-2 0.1l-2 0l-2 0.6l-2 -0.3l-2 -0.3l-2 0.2l-2.1 -0.3l-2 0.3l-2 -0.2l-2 -0.1l-2 -0.2l-2 0.2l-2 0.3l-2 0.3l-2 0.2l-2 0.1l-2 0.5l-2 0l-2 -0.4l-2 0.2l-2 -1l-2 -0.1l-2.1 0.2l-2 -0.1l-2 0l-2 0l-2 -0.1l-2 0.5l-2 -0.2l-2 0.4l-2 -0.5l-2 -0.4l-2 0.4l-2 -0.3l-2 -0.3l-2 -0.1l-2 0l-2 0.4l-2 0.6l-2 -0.7l-2.1 -0.1l-2 -0.7l-2 0.3l-2 0.4l-2 -0.4l-2 0.4l-2 0.3l-2 0l-2 0.2l-2 -0.3l-2 -0.4l-2 0.6l-2 0.2l-2 -0.2l-2 -0.4l-2 -0.3l-2.1 -0.5l-2 0l-2 0.2l-2 0.5l-2 0.2l-2 0.1l-2 -0.4l-2 0.2l-2 0.4l-2 -0.4l-2 0.3l-2 0l-2 -0.5l-2 0l-2 0.3l-2 -0.1l-2 -0.2l-2 0.3l-2.1 -0.3l-2 0l-2 0.1l-2 0.4l-2 -0.6l-2 0.2l-2 -0.4l-2 0.8l-2 0l-2 -0.3l-2 0.2l-2 -0.5l-2 0l-2 -0.1l-2 -0.5l-2 0l-2.1 0.7l-2 0.6l-2 0.6l-2 -0.3l-2 -0.6l-2 -0.1l-2 0.4l-2 -0.2l-2 0l-2 0l-2 0.3l-2 -0.2l-2 -0.2l-2 0.2l-2 0.5l-2 -0.5l-2 -0.2l-2 -0.2l-2.1 0.1l-2 -0.1l-2 0.1l-2 0.6l-2 -0.2l-2 0.1l-2 0.5l-2 -0.5l-2 -0.1l-2 0.6l-2 -0.1l-2 0l-2 -0.4l-2 -0.1l-2 -0.8l-2 0.5l-2.1 -0.1l-2 -0.1l-2 0.1l-2 -0.7l-2 0.2l-2 0l-2 0l-2 0.5l-2 -0.2l-2 0.3l-2 -0.1l-2 0.3l-2 -0.5l-2 0.3l-2 0.4l-2 0.1l-2 0.4l-2 -0.5l-2.1 0l-2 -0.6l-2 0.3l-2 -0.4l-2 0.5l-2 0l-2 -0.4l-2 0.3l-2 -0.4l-2 -0.1l-2 0.6l-2 -0.4l-2 0.1l-2 0.1l-2 0.6l-2 -0.2l-2.1 0.1l0 2.6l2.1 -0.3l2 0.4l2 -0.2l2 0.1l2 0.7l2 0.2l2 -0.5l2 -0.1l2 0.7l2 0l2 -0.7l2 0.4l2 -0.4l2 0l2 -0.2l2 0.4l2.1 -0.3l2 0l2 -0.6l2 0.4l2 -0.3l2 -0.5l2 0.3l2 -0.4l2 0.2l2 -0.1l2 0.4l2 0.3l2 0.1l2 -0.2l2 0l2 0.4l2 -0.4l2 0l2.1 0.1l2 0l2 0.1l2 0l2 -0.2l2 0.3l2 0.5l2 -0.6l2 -0.6l2 0.6l2 -0.1l2 -0.4l2 0.2l2 0.3l2 -0.2l2 0.1l2.1 -0.1l2 -0.2l2 0.6l2 -0.1l2 -0.6l2 0l2 0.6l2 0.3l2 0.4l2 -0.1l2 -0.2l2 -0.6l2 0.2l2 0l2 -0.4l2 0.1l2 0.4l2 -0.3l2.1 0l2 0.2l2 -0.5l2 0.4l2 -0.2l2 0.4l2 0.4l2 -0.4l2 -0.5l2 -0.2l2 0.5l2 -0.5l2 0.6l2 -0.2l2 0.5l2 0.2l2.1 0l2 -0.7l2 -0.3l2 0.2l2 0.9l2 0.1l2 -0.5l2 -0.1l2 -0.4l2 -0.2l2 -0.2l2 0.1l2 -0.5l2 1.2l2 0.5l2 0.2l2 -0.2l2 -0.8l2.1 0.4l2 -0.1l2 0.2l2 0.1l2 0.2l2 0.4l2 -0.4l2 -0.6l2 -0.1l2 -0.2l2 0.2l2 1l2 0l2 0.1l2 -0.4l2 -0.1l2.1 -0.5l2 -0.2l2 0.2l2 0.2l2 0.2l2 -0.1l2 0.1l2 0l2 0.2l2 -0.2l2 0.7l2 0.5l2 -0.9l2 -0.9l2 0.4l2 0l2 0.4l2 -0.2l2.1 -0.2l2 -0.3l2 0l2 0.3l2 0.3l2 -0.2l2 0.5l2 -0.1l2 -0.3l2 0l2 -0.3l2 0l2 -0.1l2 0.2l2 0l2 0.3l2.1 -0.2l2 -0.2l2 0.2l2 0.3l2 -0.3l2 -0.7l2 -0.3l2 0l2 -0.2l2 0.5l2 -0.3l2 -0.1l2 0.7l2 -0.2l2 0.2l2 -0.5l2 0.3l2 0l2.1 0.3l2 0.1l2 -0.3l2 -0.1l2 -0.3l2 0.2l2 -1.1l2 0.9l2 0.7l2 -1l2 0.5l2 0l2 -0.3l2 0.3l2 -0.3l2 -0.3l2 0.5l2.1 -0.7l2 0.8l2 0.4l2 0l2 0.5l2 -0.1l2 0l2 0l2 -0.5l2 -0.6l2 -0.2l2 0.1l2 -0.2l2 -0.1l2 0.4l2 0.5l2 0.1l2.1 0.6l2 -0.4l2 0l2 0l2 0.4l2 -0.2l2 -0.6l2 -0.3l2 0.2l2 -0.1l2 0.3l2 -0.2l2 -0.6l2 0.9l2 -0.1l2 0l2.1 0.3l2 -0.1l2 0.3l2 -0.3l2 -0.1l2 0.3l2 0.2l2 -0.5l2 0.2l2 -0.4l2 -0.3l2 0.3l2 -0.5l2 0.5l2 0l2 0.5l2 0.3l2 -0.3l2.1 0.4l2 0.2l2 -0.3l2 -0.4l2 0l2 0.2l2 0.2l2 0.6l2 -0.6l2 -0.2l2 0.2l2 0l2 -0.2l2 0.2l2 -0.5l2 -0.4l2.1 0.2ZM735.8 670.1l-0.3 2l0.3 2l0.1 2l-0.1 2l-0.7 2l0.4 2l0.3 2l-0.2 2l0.2 2l-0.5 2l-0.3 2.1l0.3 2l0.1 2l-0.2 2l0.3 2l-0.1 2l-0.3 2l0.4 2l-0.4 2l0 2l-0.2 2l0.1 2.1l0.3 2l-0.1 2l-0.4 2l-0.5 2l0.3 2l-0.4 2l0.4 2l0.2 2l-0.6 2l0.4 2l0.4 2.1l-0.1 2l-0.1 2l-0.2 2l0.2 2l-0.1 2l0.4 2l0.3 2l-0.2 2l0.3 2l-0.2 2l-0.5 2.1l0.2 2l0.3 2l0.2 2l-0.2 2l-0.3 2l0.6 2l-0.3 2l-0.5 2l0.1 2l-0.2 2.1l0.1 2l-0.7 2l-0.3 2l0.5 2l0 2l0.6 2l-0.2 2l-0.1 2l0.3 2l0 2l0.6 2.1l0.4 2l-0.2 2l0 2l-0.7 2l0.4 2l-0.1 2l0.3 2l-0.5 2l-0.2 2l-0.3 2l0.5 2.1l-0.2 2l0.1 2l0 2l-0.2 2l-0.4 2l-0.2 2l0 2l-0.1 2l0.3 2l0.5 2l0.3 2.1l-0.5 2l-0.1 2l0 2l0.2 2l0 2l0.1 2l-0.2 2l0.5 2l0.1 2l0.1 2.1l2.6 0l0.6 -2.1l0 -2l-0.5 -2l-0.2 -2l0.9 -2l-0.6 -2l0.3 -2l0 -2l-0.3 -2l-0.4 -2l0.3 -2.1l0.1 -2l0.2 -2l-0.2 -2l-0.1 -2l0.4 -2l-0.6 -2l0 -2l0 -2l-0.4 -2l0.7 -2l0.1 -2.1l0.1 -2l0 -2l0 -2l0.5 -2l-0.3 -2l0.2 -2l0.2 -2l-0.3 -2l-0.5 -2l0.1 -2l-0.5 -2.1l-0.2 -2l0.2 -2l-0.5 -2l0.2 -2l0.3 -2l0.6 -2l-0.1 -2l-0.4 -2l-0.3 -2l-0.2 -2l-0.4 -2.1l1.2 -2l0.5 -2l-0.4 -2l0.4 -2l0.6 -2l-0.6 -2l-0.1 -2l-0.1 -2l-0.1 -2l0.1 -2.1l0 -2l0.1 -2l-0.4 -2l-0.3 -2l0.1 -2l0.5 -2l0.3 -2l-0.5 -2l-0.9 -2l0.4 -2l-0.6 -2.1l0.2 -2l0.2 -2l-0.6 -2l0.5 -2l0.3 -2l-0.4 -2l-0.1 -2l0.3 -2l0.1 -2l0.4 -2l0 -2.1l-0.4 -2l0.5 -2l-0.2 -2l0.2 -2l0.2 -2l0 -2l0.1 -2l-0.3 -2l0.3 -2l0 -2l0.9 -2.1l0.1 -2l-0.6 -2l0.3 -2l0 -2l-0.4 -2l-0.4 -2l-0.1 -2l0.2 -2l0.3 -2l0.1 -2ZM738.1 861.9l-2.1 0.7l-2 -0.3l-2 0l-2 0.3l-2 -1.1l-2 -0.2l-2 0.1l-2 0l-2 0.5l-2.1 0l-2 0.3l-2 -0.4l-2 -0.2l-2 -0.3l-2 -0.7l-2 1l-2 0.2l-2 0.4l-2 -0.1l-2.1 -0.4l-2 0.5l-2 0.2l-2 -0.5l-2 0.4l-2 -0.1l-2 -0.2l-2 0.2l-2 -0.4l-2 -0.7l-2.1 -0.4l-2 0.5l-2 -0.5l-2 0.5l-2 0.1l-2 0.1l-2 -0.3l-2 -0.3l-2 0.5l-2.1 0.2l-2 -0.4l-2 0.8l-2 -0.3l-2 -0.1l-2 0.1l-2 0.2l-2 -0.4l-2 0.1l-2 0.1l-2.1 -0.2l-2 0.2l-2 0.2l-2 0.2l-2 -0.3l-2 0.3l-2 -0.3l-2 0.1l-2 0.1l-2 0.2l-2.1 -0.3l-2 -0.2l-2 0.4l-2 -0.6l-2 0.3l-2 -0.3l-2 0.3l-2 -0.4l-2 0.3l-2.1 0.2l-2 0l-2 -0.3l-2 0.3l-2 0.1l-2 0.4l-2 -0.2l-2 0.4l-2 -0.5l-2 0l-2.1 -0.1l-2 0.2l-2 -0.2l-2 0l-2 -0.3l-2 0.3l-2 0l-2 0.5l-2 -0.2l-2 0.5l-2.1 0.1l-2 0l-2 -0.1l-2 0l-2 -0.1l-2 -0.4l-2 -0.1l-2 -0.6l-2 -0.3l-2 -0.1l-2.1 0l-2 0.4l-2 -0.2l-2 1.1l-2 -0.5l-2 -0.2l-2 -0.4l-2 0.1l-2 0.2l-2.1 0.6l-2 0.2l-2 0.3l-2 0l-2 0.3l-2 0.1l-2 -0.8l-2 0l-2 -0.4l-2 0.2l-2.1 0.1l-2 -0.5l-2 -0.1l-2 0.7l-2 -0.4l-2 -0.2l-2 -0.5l-2 0.5l-2 0.6l-2 0.1l-2.1 -0.1l-2 -0.1l-2 -0.4l-2 0.1l-2 -0.1l-2 0.3l-2 -0.9l-2 0.5l-2 0.1l-2.1 -0.1l-2 0.1l-2 0.4l-2 -0.1l-2 -0.6l-2 0.6l-2 -0.3l-2 0.7l-2 -0.5l-2 0.3l-2.1 -0.2l-2 0.2l-2 0.2l-2 -0.3l-2 -0.2l-2 0.1l-2 0.2l-2 0.1l-2 -0.1l-2 -0.1l-2.1 0.1l-2 -0.3l-2 0.5l-2 0.1l-2 -0.3l-2 -0.3l-2 -0.3l-2 -0.3l-2 0l-2.1 -0.4l0 3.9l2.1 0l2 0l2 0.2l2 -0.1l2 -0.7l2 -0.1l2 0.1l2 0.5l2 0.6l2.1 0l2 -0.3l2 0.4l2 -0.1l2 -0.5l2 0.4l2 -0.3l2 0.2l2 -0.1l2 0.1l2.1 -0.3l2 0.5l2 -0.4l2 -0.2l2 -0.5l2 0.4l2 0l2 -0.3l2 0l2 0.2l2.1 -0.4l2 0.3l2 0.9l2 0.3l2 -0.4l2 -0.1l2 -0.1l2 0.1l2 0.2l2.1 -0.1l2 -0.3l2 -0.3l2 -0.1l2 0.5l2 -0.3l2 0l2 0.5l2 -0.1l2 0.4l2.1 -0.2l2 0l2 -0.1l2 0l2 0.1l2 -0.5l2 0.2l2 0.4l2 0l2 -0.2l2.1 -0.3l2 0.1l2 0.1l2 -0.3l2 -0.1l2 0.3l2 -0.1l2 -0.4l2 0.3l2.1 0.2l2 -0.3l2 0.3l2 0.6l2 -0.1l2 0.2l2 0l2 -0.8l2 0.2l2 0.2l2.1 0l2 -0.3l2 -0.6l2 -0.1l2 0.3l2 0.3l2 0l2 0.1l2 0l2 -0.2l2.1 -0.1l2 0.1l2 -0.2l2 0.4l2 0.3l2 -0.5l2 0.5l2 -0.9l2 -0.4l2 0.4l2.1 0.3l2 0.6l2 -0.2l2 -0.5l2 0.4l2 -0.5l2 0.1l2 0.2l2 -0.7l2.1 0.9l2 0.1l2 -0.3l2 0.3l2 -0.1l2 0.2l2 -0.5l2 0.6l2 0l2 0l2.1 0.2l2 0l2 -0.5l2 -0.3l2 0l2 0.1l2 0.7l2 -0.7l2 -0.5l2 0l2.1 -0.4l2 0.5l2 -0.2l2 0.2l2 -0.1l2 0.1l2 0.1l2 -0.3l2 0.2l2.1 0.7l2 -0.1l2 -0.1l2 -0.2l2 0.2l2 -0.3l2 0.2l2 -0.6l2 -0.2l2 0.6l2.1 0.4l2 0.2l2 0.3l2 -0.1l2 0.1l2 0l2 -0.3l2 0l2 -0.5l2 -0.1l2.1 -0.4l2 0.1l2 0.1l2 0.1l2 0.4l2 0l2 0.7l2 -0.3l2 -0.3l2.1 0ZM409.6 864.9l0.1 -2.1l0.2 -2l0 -2l0.4 -2l-0.4 -2l-0.4 -2l-0.1 -2l0.4 -2l0.3 -2l0 -2l0.3 -2.1l-0.3 -2l-0.1 -2l0 -2l-0.7 -2l0.6 -2l-0.3 -2l0.3 -2l-0.6 -2l0 -2l-0.1 -2l0.1 -2.1l0.3 -2l-0.3 -2l0.2 -2l-0.2 -2l-0.7 -2l0.6 -2l0.5 -2l-0.4 -2l0.2 -2l0 -2l-0.5 -2.1l-0.2 -2l-0.1 -2l-0.1 -2l-0.1 -2l0.4 -2l0 -2l0.3 -2l0.3 -2l-0.4 -2l-0.4 -2l0.7 -2.1l-0.4 -2l0.4 -2l-0.2 -2l0.4 -2l-0.2 -2l0.1 -2l-0.1 -2l-0.2 -2l-0.1 -2l0.2 -2.1l-0.1 -2l-0.1 -2l0 -2l0.1 -2l0.5 -2l-0.3 -2l0.2 -2l0.1 -2l0.2 -2l-0.1 -2l-0.2 -2.1l-0.3 -2l-0.2 -2l-0.2 -2l0.5 -2l-0.2 -2l0.6 -2l-0.3 -2l0.2 -2l0 -2l0 -2l0 -2.1l0 -2l-0.1 -2l0.2 -2l-0.1 -2l0.1 -2l0.6 -2l-0.6 -2l-0.1 -2l-0.3 -2l0.1 -2l0.2 -2.1l-0.3 -2l0.1 -2l-0.3 -2l0.5 -2l-0.2 -2l-0.2 -2l0 -2l0 -2l0.2 -2l-0.3 -2.1l-3.2 0l-0.4 2.1l-0.1 2l0.5 2l-0.4 2l1 2l0.2 2l0 2l-0.2 2l-0.9 2l-0.1 2l0.1 2.1l1.1 2l-0.6 2l0.1 2l0.3 2l-0.2 2l-0.1 2l-0.1 2l-0.5 2l-0.1 2l0.5 2l-0.5 2.1l0.3 2l0.3 2l-0.4 2l0.5 2l0.1 2l-0.4 2l0 2l0.1 2l-0.7 2l0.4 2l0.1 2.1l-0.3 2l0.8 2l0.4 2l-0.2 2l-0.2 2l-0.1 2l-0.7 2l0.6 2l-0.1 2l0.2 2l-0.1 2.1l0.5 2l0.2 2l-0.2 2l-0.4 2l0.1 2l-0.1 2l-0.3 2l0.1 2l0.2 2l0 2.1l0.2 2l-0.3 2l0.3 2l0.7 2l-0.5 2l-0.5 2l0.3 2l-0.1 2l0.1 2l-0.1 2l0 2.1l0 2l0 2l0 2l-0.6 2l0.2 2l0 2l0.9 2l-0.1 2l0.1 2l-0.9 2l0.6 2.1l-0.7 2l0.5 2l0.2 2l0.2 2l0 2l-0.3 2l0.3 2l0.5 2l-0.3 2l-0.4 2l0.1 2.1l-0.6 2l0.4 2l-0.1 2l-0.1 2l0.3 2l-0.3 2l0.7 2l-0.1 2l0 2l-0.1 2.1ZM409.6 670.2l-2.1 0.7l-2 -0.2l-2 0.5l-2 0.2l-2 -0.7l-2 -0.7l-2 0.9l-2 0.2l-2 -0.1l-2 -0.3l-2 0l-2 -0.2l-2 -0.4l-2 -0.7l-2 0.2l-2 0.2l-2 0.5l-2 -0.2l-2 0.4l-2 -0.4l-2 -0.7l-2 0.9l-2 0.1l-2 0.1l-2 -0.6l-2 -0.2l-2 -0.3l-2 1.1l-2 -0.5l-2 -0.5l-2 0.8l-2 -0.1l-2 0.8l-2 -0.7l-2 0.1l-2 0l-2 -0.5l-2 -0.9l-2 0l-2 0l-2 1.1l-2 0.1l-2 -0.3l-2 -0.2l-2 0.2l-2 -0.1l-2 0.1l-2 -0.2l-2.1 0.2l-2 -0.3l-2 0.2l-2 -0.1l-2 -0.6l-2 -0.2l-2 0.6l-2 0.6l-2 0.2l-2 0.1l-2 -0.9l-2 -0.4l-2 -0.3l-2 0.5l-2 -0.3l-2 0.1l-2 0.5l-2 -0.4l-2 0.9l-2 -0.4l-2 -0.7l-2 0.1l-2 1.1l-2 0.1l-2 0.2l-2 -0.4l-2 -0.1l-2 -0.3l-2 0l-2 0.2l-2 -0.3l-2 0.5l-2 -0.8l-2 0.8l-2 0.1l-2 -0.3l-2 0l-2 -0.3l-2 0.2l-2 -0.6l-2 1l-2 -0.8l-2 -0.1l-2 0.7l-2 0.3l-2 -0.1l-2 0l-2 -0.3l-2 0.4l-2.1 0l-2 0.2l-2 0l-2 0.1l-2 -0.1l-2 0.3l-2 -0.2l-2 0l-2 -0.3l-2 -0.2l-2 -0.1l-2 0l-2 0.2l-2 -0.1l-2 -0.2l-2 0.5l-2 -0.1l-2 0l-2 -0.3l-2 -0.4l-2 0.9l-2 -0.1l-2 0.3l-2 0l-2 -0.1l-2 -0.1l-2 0l-2 0.5l-2 0.1l-2 -0.4l-2 -0.4l-2 -0.1l-2 -0.4l-2 -0.3l-2 -0.5l-2 0.1l-2 0.9l-2 -0.4l-2 0.5l-2 -0.3l-2 0.5l-2 0l-2 -0.6l-2 -0.1l-2 0.1l-2 0.3l-2 0.6l-2 0l-2 -0.2l-2.1 -0.1l-2 -0.3l-2 0.4l-2 -0.3l-2 -0.3l-2 -0.2l-2 0.2l-2 -0.2l-2 -0.1l-2 0.2l-2 0.2l-2 0.5l-2 0.3l-2 -0.4l-2 -0.3l-2 -0.4l-2 -0.1l-2 -0.6l-2 0.1l-2 0.4l-2 0.3l-2 0.8l-2 -0.6l-2 -0.5l-2 0.6l-2 -0.3l-2 -0.4l-2 -0.1l-2 -0.4l-2 -0.2l-2 0.4l-2 0.3l-2 0.1l-2 0.3l-2 -0.2l-2 -0.3l-2 -0.1l-2 0l-2 0.3l-2 0.1l-2 0.1l-2 -0.1l-2 0.1l-2 0l-2 -0.3l-2 -0.1l-2 0.4l-2 0.8l-2.1 0.3l0 2.5l2.1 -0.2l2 0.4l2 -0.4l2 0.2l2 -0.3l2 0.3l2 -0.6l2 -0.3l2 0l2 0.2l2 -1l2 0.4l2 0l2 0.3l2 0l2 0l2 0.4l2 0l2 -0.2l2 -0.3l2 0.2l2 0.1l2 -0.1l2 -0.1l2 1l2 -0.1l2 0.4l2 -0.1l2 -0.8l2 0l2 -0.4l2 0.4l2 0l2 0l2 0.2l2 0.3l2 0.4l2 -0.2l2 -0.1l2 0l2 0.4l2 0.1l2 -0.2l2 0l2 0.3l2 -0.4l2 -0.1l2 0.6l2.1 -0.6l2 -0.3l2 0.2l2 -0.3l2 0.3l2 0.5l2 0l2 -0.1l2 -0.5l2 0.2l2 -0.4l2 -0.4l2 0.3l2 -0.1l2 -0.1l2 0.3l2 0.1l2 0.2l2 -0.2l2 0.6l2 0.2l2 0.1l2 0.3l2 -0.4l2 0.1l2 -0.4l2 -0.6l2 0.4l2 0l2 0.2l2 -0.6l2 -0.2l2 0.2l2 -0.1l2 -0.1l2 0.2l2 0.2l2 0.6l2 0.4l2 0.1l2 -0.6l2 0.2l2 -0.1l2 -0.6l2 -0.3l2 0.3l2 -0.2l2 0.2l2 0.2l2.1 0.6l2 -0.1l2 0l2 -0.5l2 -0.1l2 -0.3l2 0.4l2 0.1l2 -0.1l2 -0.1l2 -0.6l2 0.2l2 0.1l2 -0.3l2 0.1l2 0.3l2 -0.3l2 0.1l2 0.8l2 -0.1l2 -0.1l2 -0.3l2 0l2 0l2 0.1l2 0.5l2 -0.2l2 -0.8l2 0l2 0.1l2 -0.4l2 0.1l2 0l2 0.2l2 -0.1l2 -0.2l2 0.3l2 -0.1l2 0.1l2 0.8l2 -0.7l2 0.5l2 -0.2l2 -0.4l2 0.2l2 0.2l2 0.3l2 -0.3l2 0.1l2.1 -0.3l2 0l2 0.1l2 -0.3l2 0.3l2 -0.4l2 0.3l2 0l2 -0.3l2 0l2 0.4l2 -0.1l2 -0.4l2 0.7l2 0.3l2 0.3l2 -0.1l2 -0.3l2 -0.8l2 0.7l2 0l2 0.3l2 -0.6l2 -0.2l2 0.2l2 -0.6l2 0.5l2 0.4l2 -0.6l2 0.2l2 -0.1l2 -0.1l2 0.4l2 -0.1l2 0.2l2 0.3l2 -0.2l2 0.2l2 0.2l2 -0.4l2 0.7l2 -0.4l2 -0.3l2 0.8l2 -0.1l2 -0.2l2 -0.1l2 0.7l2.1 0.3ZM22.1 673.1l-0.2 -2.1l0.3 -2l-0.3 -2l0 -2l0 -2.1l0.1 -2l-0.6 -2l0.8 -2l0.1 -2l-0.3 -2.1l-0.3 -2l0.2 -2l-0.2 -2l0.8 -2.1l0.4 -2l-0.8 -2l-0.4 -2l0.1 -2l0.4 -2.1l0 -2l0 -2l0.4 -2l0.2 -2.1l-0.1 -2l0.2 -2l0.1 -2l-0.4 -2l0.4 -2.1l-0.3 -2l0.3 -2l-0.3 -2l-0.2 -2.1l-0.4 -2l0.9 -2l-0.6 -2l0.7 -2l-0.4 -2.1l-0.7 -2l-0.1 -2l0 -2l0.3 -2.1l-0.1 -2l-0.1 -2l-0.8 -2l0.3 -2l0.1 -2.1l0.1 -2l-0.2 -2l0.7 -2l-0.6 -2l0.2 -2.1l-0.5 -2l0.1 -2l0.3 -2l0 -2.1l0.4 -2l0.7 -2l-0.6 -2l-0.5 -2l-0.3 -2.1l0.4 -2l0.2 -2l0.3 -2l-0.3 -2.1l0 -2l0 -2l0.4 -2l-0.4 -2l0.2 -2.1l-0.4 -2l-0.1 -2l-0.1 -2l0.3 -2.1l0 -2l0.3 -2l-0.1 -2l-0.2 -2l0 -2.1l-0.4 -2l-0.1 -2l0 -2l0.5 -2.1l-2.8 0l-0.3 2.1l-0.2 2l0.6 2l-0.1 2l0 2.1l0.2 2l0 2l-0.1 2l-0.3 2l-0.1 2.1l0.4 2l-0.3 2l0.3 2l-0.6 2.1l0.7 2l-0.2 2l-0.1 2l-0.2 2l-0.3 2.1l0.2 2l0.6 2l-0.1 2l-0.2 2.1l-0.6 2l0 2l0.7 2l0.1 2l-0.6 2.1l0.5 2l-0.3 2l-0.5 2l0.8 2.1l-0.6 2l0.1 2l0.4 2l-0.1 2l0 2.1l-0.2 2l-0.1 2l0.2 2l0.1 2l0 2.1l0 2l-0.1 2l0.6 2l0.1 2.1l0.1 2l-0.7 2l-0.1 2l-0.2 2l0.3 2.1l0.3 2l-0.1 2l-0.5 2l0.8 2.1l-0.4 2l-0.4 2l0.7 2l-0.7 2l0.7 2.1l0.2 2l-0.6 2l1.1 2l-0.7 2.1l-0.2 2l-0.2 2l0.3 2l0.1 2l-0.2 2.1l0.2 2l0.2 2l-1 2l0.2 2.1l0.4 2l0.1 2l0.3 2l-0.5 2l0.4 2.1l-0.4 2l-0.1 2l0.1 2l-0.5 2.1Z" fill="#9364f4" stroke="#9364f4" stroke-opacity=".38" stroke-width="1" stroke-linejoin="round"/></svg>
</body></html>
